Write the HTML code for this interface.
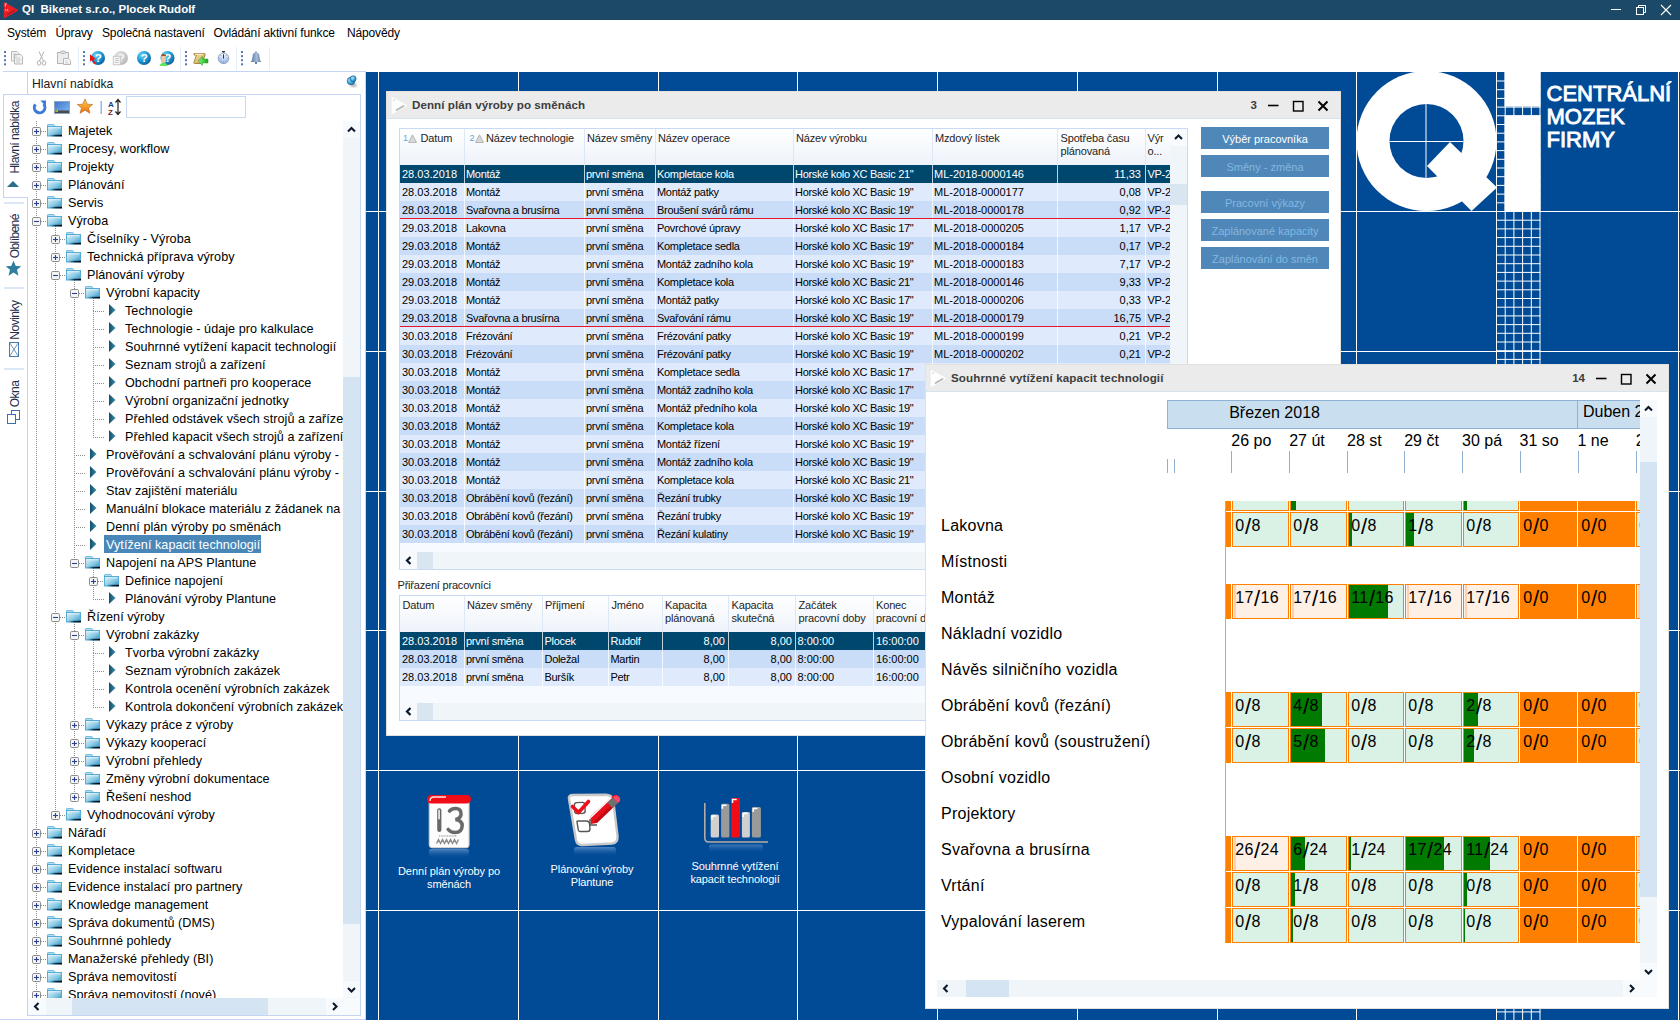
<!DOCTYPE html><html><head><meta charset="utf-8"><title>QI</title><style>
*{box-sizing:border-box}
html,body{margin:0;padding:0}
body{width:1680px;height:1020px;position:relative;overflow:hidden;background:#fff;font-family:"Liberation Sans",sans-serif;color:#000}
div{position:absolute}
svg{position:absolute}
.t{white-space:nowrap;line-height:1}
.sl{display:inline-block;transform:translateY(0.9px) scale(1.38,1.33);margin:0 1.1px 0 1.3px}
</style></head><body><div style="left:0px;top:0px;width:1680px;height:20px;background:#1c4968"></div><svg style="left:3px;top:1px" width="17" height="18" viewBox="0 0 17 18"><path d="M1.2 1.5 L15 9.2 L1.2 17 Z" fill="#ee1c24" stroke="#ee1c24" stroke-width="0.8" stroke-linejoin="round"/><path d="M4.5 13.5 L11.5 9.3" stroke="#a81818" stroke-width="1.3" stroke-linecap="round"/><path d="M2.3 5.5 V2.8 H3.8" stroke="#f8c8c8" stroke-width="1" fill="none"/><path d="M2 8.2 L3 9.2 L2 10.2 M4 8.2 L5 9.2 L4 10.2" stroke="#f6c0c0" stroke-width="0.9" fill="none"/></svg><div class="t" style="left:22px;top:4px;color:#fff;font-weight:bold;font-size:11.5px">QI&nbsp; Bikenet s.r.o., Plocek Rudolf</div><svg style="left:1600px;top:0" width="80" height="20" viewBox="0 0 80 20"><path d="M11 9.5 H21" stroke="#fff" stroke-width="1"/><rect x="36.5" y="7.5" width="7" height="7" fill="none" stroke="#fff"/><path d="M38.5 7.5 V5.5 H45.5 V12.5 H43.5" fill="none" stroke="#fff"/><path d="M61 5 L71 15 M71 5 L61 15" stroke="#fff" stroke-width="1.1"/></svg><div class="t" style="left:7px;top:27px;font-size:12px;letter-spacing:-0.15px;color:#000">Systém</div><div class="t" style="left:55.5px;top:27px;font-size:12px;letter-spacing:-0.15px;color:#000">Úpravy</div><div class="t" style="left:102px;top:27px;font-size:12px;letter-spacing:-0.15px;color:#000">Společná nastavení</div><div class="t" style="left:213.5px;top:27px;font-size:12px;letter-spacing:-0.15px;color:#000">Ovládání aktivní funkce</div><div class="t" style="left:347px;top:27px;font-size:12px;letter-spacing:-0.15px;color:#000">Nápovědy</div><svg style="left:4px;top:51px" width="3" height="16"><rect x="0" y="0.0" width="2" height="2" fill="#5578b4"/><rect x="0" y="4.1" width="2" height="2" fill="#5578b4"/><rect x="0" y="8.2" width="2" height="2" fill="#5578b4"/><rect x="0" y="12.3" width="2" height="2" fill="#5578b4"/></svg><svg style="left:83px;top:51px" width="3" height="16"><rect x="0" y="0.0" width="2" height="2" fill="#5578b4"/><rect x="0" y="4.1" width="2" height="2" fill="#5578b4"/><rect x="0" y="8.2" width="2" height="2" fill="#5578b4"/><rect x="0" y="12.3" width="2" height="2" fill="#5578b4"/></svg><svg style="left:185px;top:51px" width="3" height="16"><rect x="0" y="0.0" width="2" height="2" fill="#5578b4"/><rect x="0" y="4.1" width="2" height="2" fill="#5578b4"/><rect x="0" y="8.2" width="2" height="2" fill="#5578b4"/><rect x="0" y="12.3" width="2" height="2" fill="#5578b4"/></svg><svg style="left:241px;top:51px" width="3" height="16"><rect x="0" y="0.0" width="2" height="2" fill="#5578b4"/><rect x="0" y="4.1" width="2" height="2" fill="#5578b4"/><rect x="0" y="8.2" width="2" height="2" fill="#5578b4"/><rect x="0" y="12.3" width="2" height="2" fill="#5578b4"/></svg><div style="left:78px;top:47px;width:1px;height:23px;background:#e6eef9"></div><div style="left:180px;top:47px;width:1px;height:23px;background:#e6eef9"></div><div style="left:236px;top:47px;width:1px;height:23px;background:#e6eef9"></div><div style="left:269px;top:47px;width:1px;height:23px;background:#e6eef9"></div><svg style="left:0;top:0" width="280" height="72"><defs><radialGradient id="hg" cx="0.35" cy="0.3" r="0.75"><stop offset="0" stop-color="#6fd4f8"/><stop offset="0.55" stop-color="#1a9ad6"/><stop offset="1" stop-color="#0a5e98"/></radialGradient><radialGradient id="gg" cx="0.35" cy="0.3" r="0.75"><stop offset="0" stop-color="#e6e6e6"/><stop offset="1" stop-color="#b8b8b8"/></radialGradient><linearGradient id="pg" x1="0" y1="0" x2="1" y2="1"><stop offset="0" stop-color="#f8e8b0"/><stop offset="1" stop-color="#c89a40"/></linearGradient><linearGradient id="arg" x1="0" y1="0" x2="1" y2="0"><stop offset="0" stop-color="#8af08a"/><stop offset="1" stop-color="#1aa81a"/></linearGradient><linearGradient id="swg" x1="0" y1="0" x2="0" y2="1"><stop offset="0" stop-color="#fafcff"/><stop offset="1" stop-color="#98b8e8"/></linearGradient><linearGradient id="blg" x1="0" y1="0" x2="1" y2="0"><stop offset="0" stop-color="#4a70a0"/><stop offset="0.55" stop-color="#a8bcd8"/><stop offset="1" stop-color="#5a7aa8"/></linearGradient></defs><g stroke="#b0b0b0" stroke-width="0.9" fill="#f4f4f4"><path d="M11.5 51.5h5.5l2 2v7.5h-7.5z"/><path d="M14.5 54.5h6l2 2v7.5h-8z"/></g><path d="M13 54h3 M13 56h4 M13 58h3 M16 58h4 M16 60h5 M16 62h4" stroke="#c0c0c0" stroke-width="0.8"/><g stroke="#b4b4b4" fill="none" stroke-width="1"><path d="M39 51.5 L43.5 61 M44 51.5 L39.5 61"/><ellipse cx="39" cy="63" rx="1.8" ry="2.2"/><ellipse cx="44" cy="63" rx="1.8" ry="2.2"/></g><g stroke="#b0b0b0" stroke-width="0.9"><rect x="57.5" y="52.5" width="11" height="11" fill="#ececec"/><rect x="60.5" y="51" width="5" height="2.5" rx="1" fill="#e0e0e0"/><path d="M63.5 58.5h5l2 2v4h-7z" fill="#f8f8f8"/></g><path d="M65 61h3 M65 63h4" stroke="#c4c4c4" stroke-width="0.8"/><circle cx="98" cy="58" r="7" fill="url(#hg)"/><text x="98.3" y="62.2" font-size="11.5" font-weight="bold" text-anchor="middle" fill="#fff" font-family="Liberation Sans">?</text><path d="M90 54.2 L90 61.8 L92 60 L94.3 64.3 L95.6 63.6 L93.4 59.4 L96 59.2 Z" fill="#f01010"/><circle cx="121" cy="58" r="7" fill="url(#gg)"/><text x="121.3" y="62.2" font-size="11.5" font-weight="bold" text-anchor="middle" fill="#f2f2f2" font-family="Liberation Sans">?</text><rect x="113.3" y="56.3" width="7" height="8.5" fill="#f6f6f6" stroke="#c4c4c4" stroke-width="0.9"/><path d="M115 58.5h4 M115 60.5h4 M115 62.5h3.5" stroke="#bbb" stroke-width="0.8"/><circle cx="144" cy="58" r="7" fill="url(#hg)"/><text x="144.3" y="62.2" font-size="11.5" font-weight="bold" text-anchor="middle" fill="#fff" font-family="Liberation Sans">?</text><circle cx="167.5" cy="58" r="7" fill="url(#hg)"/><text x="167.8" y="62.2" font-size="11.5" font-weight="bold" text-anchor="middle" fill="#fff" font-family="Liberation Sans">?</text><path d="M159.5 66 Q160 63 163.5 62.8 Q167 63 167.8 66 Z" fill="#5ee85e"/><rect x="161.2" y="55.5" width="4.6" height="7.2" rx="1.5" fill="#f0c8a0"/><path d="M160.8 57.5 Q160.8 54 163.5 54 Q166.3 54 166.3 57 L165.5 56 L161.5 56 Z" fill="#a0521a"/><path d="M194 53.5 H204.5 Q205.5 53.5 205 55 L202.5 62.5 Q202 63.5 201 63.5 H194.5 Q193.5 63.5 194 62 L196.5 55 L194 55 Z" fill="url(#pg)" stroke="#9a7028" stroke-width="0.8"/><path d="M195 54.2 H203" stroke="#fff6d8" stroke-width="0.9"/><path d="M198 61 L202.5 56.5 V59 H208 V63 H202.5 V65.5 Z" fill="url(#arg)" stroke="#22a022" stroke-width="0.5"/><rect x="222" y="51" width="3" height="1.3" fill="#333"/><path d="M223.5 52 V53" stroke="#666"/><circle cx="223.5" cy="58.3" r="5.3" fill="url(#swg)" stroke="#7a8ab0" stroke-width="0.8"/><path d="M223.5 54.5 V58.5" stroke="#333" stroke-width="1"/><circle cx="227.10" cy="58.30" r="0.45" fill="#4a4a7a"/><circle cx="226.05" cy="60.85" r="0.45" fill="#4a4a7a"/><circle cx="223.50" cy="61.90" r="0.45" fill="#4a4a7a"/><circle cx="220.95" cy="60.85" r="0.45" fill="#4a4a7a"/><circle cx="219.90" cy="58.30" r="0.45" fill="#4a4a7a"/><circle cx="220.95" cy="55.75" r="0.45" fill="#4a4a7a"/><circle cx="223.50" cy="54.70" r="0.45" fill="#4a4a7a"/><circle cx="226.05" cy="55.75" r="0.45" fill="#4a4a7a"/><path d="M256 52.2 Q252.5 52.5 252.5 57 Q252.5 60.5 250.8 62 H261.2 Q259.5 60.5 259.5 57 Q259.5 52.5 256 52.2 Z" fill="url(#blg)"/><rect x="255" y="62" width="2" height="1.8" fill="#4a70a0"/><rect x="255.3" y="51.5" width="1.4" height="1.2" fill="#5a7aa8"/></svg><div style="left:3px;top:71px;width:363px;height:1px;background:#c3d5f2"></div><div style="left:365px;top:71px;width:1px;height:949px;background:#c3d5f2"></div><div style="left:27px;top:71px;width:1px;height:23px;background:#c3d5f2"></div><div class="t" style="left:32px;top:77.6px;font-size:12.2px;color:#1b1b1b">Hlavní nabídka</div><svg style="left:344px;top:74px" width="16" height="16" viewBox="0 0 16 16"><defs><radialGradient id="pinh" cx="0.4" cy="0.35" r="0.7"><stop offset="0" stop-color="#b8e8fa"/><stop offset="0.6" stop-color="#3aa8dc"/><stop offset="1" stop-color="#1a6aa0"/></radialGradient><filter id="pbl"><feGaussianBlur stdDeviation="1"/></filter></defs><ellipse cx="9.5" cy="11" rx="3.2" ry="2" fill="#555" opacity="0.45" filter="url(#pbl)"/><circle cx="7" cy="7" r="3.8" fill="url(#pinh)" stroke="#1f5f90" stroke-width="0.7"/><circle cx="9.1" cy="4.8" r="3" fill="url(#pinh)" stroke="#1f5f90" stroke-width="0.7"/></svg><div style="left:3px;top:94px;width:358px;height:1px;background:#c3d5f2"></div><div style="left:3px;top:94px;width:1px;height:104px;background:#c3d5f2"></div><div style="left:3px;top:197px;width:25px;height:1px;background:#c3d5f2"></div><div style="left:27px;top:197px;width:1px;height:819px;background:#c3d5f2"></div><div style="left:360px;top:94px;width:1px;height:922px;background:#c3d5f2"></div><div style="left:27px;top:1015px;width:334px;height:1px;background:#c3d5f2"></div><div style="left:0px;top:1019px;width:366px;height:1px;background:#c3d5f2"></div><div style="left:4px;top:202px;width:20px;height:2px;background:#dbe6f6"></div><div style="left:4px;top:287px;width:20px;height:2px;background:#dbe6f6"></div><div style="left:4px;top:368px;width:20px;height:2px;background:#dbe6f6"></div><svg style="left:0;top:0" width="28" height="430"><text x="0" y="0" transform="translate(18.5,173.6) rotate(-90)" font-family="Liberation Sans" font-size="12" letter-spacing="-0.55" fill="#1f2d48">Hlavní nabídka</text></svg><svg style="left:0;top:0" width="28" height="430"><text x="0" y="0" transform="translate(18.5,258.2) rotate(-90)" font-family="Liberation Sans" font-size="12" letter-spacing="-0.6" fill="#1f2d48">Oblíbené</text></svg><svg style="left:0;top:0" width="28" height="430"><text x="0" y="0" transform="translate(18.5,339.7) rotate(-90)" font-family="Liberation Sans" font-size="12" letter-spacing="-0.5" fill="#1f2d48">Novinky</text></svg><svg style="left:0;top:0" width="28" height="430"><text x="0" y="0" transform="translate(18.5,407.3) rotate(-90)" font-family="Liberation Sans" font-size="12" letter-spacing="-0.5" fill="#1f2d48">Okna</text></svg><svg style="left:6px;top:180px" width="14" height="8"><path d="M1 7 L7 1 L13 7 Z" fill="#2b6f8a"/></svg><svg style="left:5px;top:260px" width="17" height="17" viewBox="0 0 17 17"><path d="M8.5 0.8 L10.8 6 L16.3 6.3 L12 9.8 L13.5 15.8 L8.5 12.5 L3.5 15.8 L5 9.8 L0.7 6.3 L6.2 6 Z" fill="#2f7ea0"/></svg><svg style="left:9px;top:342px" width="10" height="15"><rect x="0.5" y="0.5" width="9" height="14" fill="none" stroke="#4a7ab0"/><path d="M0.5 0.5 L5 7.5 L9.5 0.5 M0.5 14.5 L5 7.5 L9.5 14.5" fill="none" stroke="#4a7ab0" stroke-width="0.8"/></svg><svg style="left:7px;top:410px" width="13" height="14"><rect x="4.5" y="0.5" width="8" height="9" fill="#fff" stroke="#3a70b0"/><rect x="0.5" y="4.5" width="8" height="9" fill="#fff" stroke="#3a70b0"/></svg><svg style="left:30px;top:97px" width="220" height="22" viewBox="0 0 220 22"><defs><linearGradient id="stg" x1="0" y1="0" x2="0" y2="1"><stop offset="0" stop-color="#ffd84a"/><stop offset="1" stop-color="#f06a10"/></linearGradient><linearGradient id="mong" x1="0" y1="0" x2="1" y2="1"><stop offset="0" stop-color="#3f72c8"/><stop offset="1" stop-color="#82bdf5"/></linearGradient></defs><path d="M5.4 7.3 A5.3 5.3 0 1 0 13.6 7.0" fill="none" stroke="#3a7ad8" stroke-width="3"/><path d="M10.3 3.6 L16 3.6 L16 9.3 Z" fill="#3a7ad8"/><rect x="24.5" y="4.5" width="15" height="12" fill="url(#mong)" stroke="#8ea4c4"/><rect x="25" y="13.5" width="14" height="2.5" fill="#4a4a4a"/><rect x="25.5" y="12.5" width="2.5" height="2.5" fill="#f0a030"/><rect x="26" y="13" width="1.2" height="1.2" fill="#3cb040"/><path d="M55 2 L57.2 7.2 L62.6 7.5 L58.5 10.9 L59.9 16.2 L55 13.2 L50.1 16.2 L51.5 10.9 L47.4 7.5 L52.8 7.2 Z" fill="url(#stg)" stroke="#b8702a" stroke-width="0.7"/><rect x="70.5" y="4" width="1.5" height="13" fill="#9ab8da"/><text x="78" y="9.5" font-size="8" font-weight="bold" fill="#1c3a8a" font-family="Liberation Sans">A</text><text x="78" y="17.5" font-size="8" font-weight="bold" fill="#7a1a1a" font-family="Liberation Sans">Z</text><path d="M88 3 V17 M85.5 5.5 L88 2.5 L90.5 5.5 M85.5 14.5 L88 17.5 L90.5 14.5" fill="none" stroke="#222" stroke-width="1.2"/></svg><div style="left:126px;top:96px;width:120px;height:22px;border:1px solid #c7d9f0;background:#fff"></div><div style="left:28px;top:119px;width:315px;height:879px;overflow:hidden"><div style="left:-28px;top:-119px;width:400px;height:1000px"><svg style="left:0;top:0" width="343" height="1000" viewBox="0 0 343 1000"><defs><linearGradient id="fg" x1="0" y1="0" x2="1" y2="1"><stop offset="0" stop-color="#e4f4fb"/><stop offset="0.55" stop-color="#8ccbe6"/><stop offset="1" stop-color="#2a90c2"/></linearGradient><linearGradient id="fsh" x1="0" y1="0" x2="1" y2="0"><stop offset="0" stop-color="#1a6a90" stop-opacity="0"/><stop offset="0.5" stop-color="#0a3044"/><stop offset="1" stop-color="#000"/></linearGradient><linearGradient id="ag" x1="0" y1="0" x2="1" y2="0"><stop offset="0" stop-color="#134f6a"/><stop offset="1" stop-color="#3a8cab"/></linearGradient></defs><line x1="36.5" y1="131" x2="36.5" y2="149" stroke="#8c8c8c" stroke-dasharray="1,1"/><line x1="36.5" y1="149" x2="36.5" y2="167" stroke="#8c8c8c" stroke-dasharray="1,1"/><line x1="36.5" y1="167" x2="36.5" y2="185" stroke="#8c8c8c" stroke-dasharray="1,1"/><line x1="36.5" y1="185" x2="36.5" y2="203" stroke="#8c8c8c" stroke-dasharray="1,1"/><line x1="36.5" y1="203" x2="36.5" y2="221" stroke="#8c8c8c" stroke-dasharray="1,1"/><line x1="36.5" y1="221" x2="36.5" y2="833" stroke="#8c8c8c" stroke-dasharray="1,1"/><line x1="55.5" y1="239" x2="55.5" y2="257" stroke="#8c8c8c" stroke-dasharray="1,1"/><line x1="55.5" y1="257" x2="55.5" y2="275" stroke="#8c8c8c" stroke-dasharray="1,1"/><line x1="55.5" y1="275" x2="55.5" y2="617" stroke="#8c8c8c" stroke-dasharray="1,1"/><line x1="74.5" y1="293" x2="74.5" y2="455" stroke="#8c8c8c" stroke-dasharray="1,1"/><line x1="93.5" y1="311" x2="93.5" y2="329" stroke="#8c8c8c" stroke-dasharray="1,1"/><line x1="93.5" y1="329" x2="93.5" y2="347" stroke="#8c8c8c" stroke-dasharray="1,1"/><line x1="93.5" y1="347" x2="93.5" y2="365" stroke="#8c8c8c" stroke-dasharray="1,1"/><line x1="93.5" y1="365" x2="93.5" y2="383" stroke="#8c8c8c" stroke-dasharray="1,1"/><line x1="93.5" y1="383" x2="93.5" y2="401" stroke="#8c8c8c" stroke-dasharray="1,1"/><line x1="93.5" y1="401" x2="93.5" y2="419" stroke="#8c8c8c" stroke-dasharray="1,1"/><line x1="93.5" y1="419" x2="93.5" y2="437" stroke="#8c8c8c" stroke-dasharray="1,1"/><line x1="74.5" y1="455" x2="74.5" y2="473" stroke="#8c8c8c" stroke-dasharray="1,1"/><line x1="74.5" y1="473" x2="74.5" y2="491" stroke="#8c8c8c" stroke-dasharray="1,1"/><line x1="74.5" y1="491" x2="74.5" y2="509" stroke="#8c8c8c" stroke-dasharray="1,1"/><line x1="74.5" y1="509" x2="74.5" y2="527" stroke="#8c8c8c" stroke-dasharray="1,1"/><line x1="74.5" y1="527" x2="74.5" y2="545" stroke="#8c8c8c" stroke-dasharray="1,1"/><line x1="74.5" y1="545" x2="74.5" y2="563" stroke="#8c8c8c" stroke-dasharray="1,1"/><line x1="93.5" y1="581" x2="93.5" y2="599" stroke="#8c8c8c" stroke-dasharray="1,1"/><line x1="55.5" y1="617" x2="55.5" y2="815" stroke="#8c8c8c" stroke-dasharray="1,1"/><line x1="74.5" y1="635" x2="74.5" y2="725" stroke="#8c8c8c" stroke-dasharray="1,1"/><line x1="93.5" y1="653" x2="93.5" y2="671" stroke="#8c8c8c" stroke-dasharray="1,1"/><line x1="93.5" y1="671" x2="93.5" y2="689" stroke="#8c8c8c" stroke-dasharray="1,1"/><line x1="93.5" y1="689" x2="93.5" y2="707" stroke="#8c8c8c" stroke-dasharray="1,1"/><line x1="74.5" y1="725" x2="74.5" y2="743" stroke="#8c8c8c" stroke-dasharray="1,1"/><line x1="74.5" y1="743" x2="74.5" y2="761" stroke="#8c8c8c" stroke-dasharray="1,1"/><line x1="74.5" y1="761" x2="74.5" y2="779" stroke="#8c8c8c" stroke-dasharray="1,1"/><line x1="74.5" y1="779" x2="74.5" y2="797" stroke="#8c8c8c" stroke-dasharray="1,1"/><line x1="36.5" y1="833" x2="36.5" y2="851" stroke="#8c8c8c" stroke-dasharray="1,1"/><line x1="36.5" y1="851" x2="36.5" y2="869" stroke="#8c8c8c" stroke-dasharray="1,1"/><line x1="36.5" y1="869" x2="36.5" y2="887" stroke="#8c8c8c" stroke-dasharray="1,1"/><line x1="36.5" y1="887" x2="36.5" y2="905" stroke="#8c8c8c" stroke-dasharray="1,1"/><line x1="36.5" y1="905" x2="36.5" y2="923" stroke="#8c8c8c" stroke-dasharray="1,1"/><line x1="36.5" y1="923" x2="36.5" y2="941" stroke="#8c8c8c" stroke-dasharray="1,1"/><line x1="36.5" y1="941" x2="36.5" y2="959" stroke="#8c8c8c" stroke-dasharray="1,1"/><line x1="36.5" y1="959" x2="36.5" y2="977" stroke="#8c8c8c" stroke-dasharray="1,1"/><line x1="36.5" y1="977" x2="36.5" y2="995" stroke="#8c8c8c" stroke-dasharray="1,1"/><line x1="55.5" y1="226" x2="55.5" y2="239" stroke="#8c8c8c" stroke-dasharray="1,1"/><line x1="74.5" y1="280" x2="74.5" y2="293" stroke="#8c8c8c" stroke-dasharray="1,1"/><line x1="93.5" y1="298" x2="93.5" y2="311" stroke="#8c8c8c" stroke-dasharray="1,1"/><line x1="93.5" y1="568" x2="93.5" y2="581" stroke="#8c8c8c" stroke-dasharray="1,1"/><line x1="74.5" y1="622" x2="74.5" y2="635" stroke="#8c8c8c" stroke-dasharray="1,1"/><line x1="93.5" y1="640" x2="93.5" y2="653" stroke="#8c8c8c" stroke-dasharray="1,1"/><line x1="36.5" y1="121" x2="36.5" y2="130" stroke="#8c8c8c" stroke-dasharray="1,1"/><line x1="36.5" y1="994" x2="36.5" y2="1000" stroke="#8c8c8c" stroke-dasharray="1,1"/><line x1="41" y1="131.5" x2="47" y2="131.5" stroke="#8c8c8c" stroke-dasharray="1,1"/><rect x="32.5" y="127.5" width="8" height="8" rx="1.2" fill="#f6f6f6" stroke="#8c8c8c"/><path d="M34 131.5 H39" stroke="#2a3f98" stroke-width="1.1"/><path d="M36.5 129 V134" stroke="#2a3f98" stroke-width="1.1"/><g transform="translate(47,124)"><path d="M0.5 3 V1 Q0.5 0.5 1 0.5 H6.8 L7.8 1.8 V3 Z" fill="#b4dcef" stroke="#5eb2d8" stroke-width="0.8"/><rect x="0.5" y="2.5" width="14" height="9.5" fill="url(#fg)" stroke="#4aa6d0" stroke-width="0.9"/><rect x="1.5" y="3.3" width="12" height="1" fill="#e8f6fc" opacity="0.85"/><rect x="2" y="10.8" width="13" height="1.6" fill="url(#fsh)"/></g><line x1="41" y1="149.5" x2="47" y2="149.5" stroke="#8c8c8c" stroke-dasharray="1,1"/><rect x="32.5" y="145.5" width="8" height="8" rx="1.2" fill="#f6f6f6" stroke="#8c8c8c"/><path d="M34 149.5 H39" stroke="#2a3f98" stroke-width="1.1"/><path d="M36.5 147 V152" stroke="#2a3f98" stroke-width="1.1"/><g transform="translate(47,142)"><path d="M0.5 3 V1 Q0.5 0.5 1 0.5 H6.8 L7.8 1.8 V3 Z" fill="#b4dcef" stroke="#5eb2d8" stroke-width="0.8"/><rect x="0.5" y="2.5" width="14" height="9.5" fill="url(#fg)" stroke="#4aa6d0" stroke-width="0.9"/><rect x="1.5" y="3.3" width="12" height="1" fill="#e8f6fc" opacity="0.85"/><rect x="2" y="10.8" width="13" height="1.6" fill="url(#fsh)"/></g><line x1="41" y1="167.5" x2="47" y2="167.5" stroke="#8c8c8c" stroke-dasharray="1,1"/><rect x="32.5" y="163.5" width="8" height="8" rx="1.2" fill="#f6f6f6" stroke="#8c8c8c"/><path d="M34 167.5 H39" stroke="#2a3f98" stroke-width="1.1"/><path d="M36.5 165 V170" stroke="#2a3f98" stroke-width="1.1"/><g transform="translate(47,160)"><path d="M0.5 3 V1 Q0.5 0.5 1 0.5 H6.8 L7.8 1.8 V3 Z" fill="#b4dcef" stroke="#5eb2d8" stroke-width="0.8"/><rect x="0.5" y="2.5" width="14" height="9.5" fill="url(#fg)" stroke="#4aa6d0" stroke-width="0.9"/><rect x="1.5" y="3.3" width="12" height="1" fill="#e8f6fc" opacity="0.85"/><rect x="2" y="10.8" width="13" height="1.6" fill="url(#fsh)"/></g><line x1="41" y1="185.5" x2="47" y2="185.5" stroke="#8c8c8c" stroke-dasharray="1,1"/><rect x="32.5" y="181.5" width="8" height="8" rx="1.2" fill="#f6f6f6" stroke="#8c8c8c"/><path d="M34 185.5 H39" stroke="#2a3f98" stroke-width="1.1"/><path d="M36.5 183 V188" stroke="#2a3f98" stroke-width="1.1"/><g transform="translate(47,178)"><path d="M0.5 3 V1 Q0.5 0.5 1 0.5 H6.8 L7.8 1.8 V3 Z" fill="#b4dcef" stroke="#5eb2d8" stroke-width="0.8"/><rect x="0.5" y="2.5" width="14" height="9.5" fill="url(#fg)" stroke="#4aa6d0" stroke-width="0.9"/><rect x="1.5" y="3.3" width="12" height="1" fill="#e8f6fc" opacity="0.85"/><rect x="2" y="10.8" width="13" height="1.6" fill="url(#fsh)"/></g><line x1="41" y1="203.5" x2="47" y2="203.5" stroke="#8c8c8c" stroke-dasharray="1,1"/><rect x="32.5" y="199.5" width="8" height="8" rx="1.2" fill="#f6f6f6" stroke="#8c8c8c"/><path d="M34 203.5 H39" stroke="#2a3f98" stroke-width="1.1"/><path d="M36.5 201 V206" stroke="#2a3f98" stroke-width="1.1"/><g transform="translate(47,196)"><path d="M0.5 3 V1 Q0.5 0.5 1 0.5 H6.8 L7.8 1.8 V3 Z" fill="#b4dcef" stroke="#5eb2d8" stroke-width="0.8"/><rect x="0.5" y="2.5" width="14" height="9.5" fill="url(#fg)" stroke="#4aa6d0" stroke-width="0.9"/><rect x="1.5" y="3.3" width="12" height="1" fill="#e8f6fc" opacity="0.85"/><rect x="2" y="10.8" width="13" height="1.6" fill="url(#fsh)"/></g><line x1="41" y1="221.5" x2="47" y2="221.5" stroke="#8c8c8c" stroke-dasharray="1,1"/><rect x="32.5" y="217.5" width="8" height="8" rx="1.2" fill="#f6f6f6" stroke="#8c8c8c"/><path d="M34 221.5 H39" stroke="#2a3f98" stroke-width="1.1"/><g transform="translate(47,214)"><path d="M0.5 3 V1 Q0.5 0.5 1 0.5 H6.8 L7.8 1.8 V3 Z" fill="#b4dcef" stroke="#5eb2d8" stroke-width="0.8"/><rect x="0.5" y="2.5" width="14" height="9.5" fill="url(#fg)" stroke="#4aa6d0" stroke-width="0.9"/><rect x="1.5" y="3.3" width="12" height="1" fill="#e8f6fc" opacity="0.85"/><rect x="2" y="10.8" width="13" height="1.6" fill="url(#fsh)"/></g><line x1="60" y1="239.5" x2="66" y2="239.5" stroke="#8c8c8c" stroke-dasharray="1,1"/><rect x="51.5" y="235.5" width="8" height="8" rx="1.2" fill="#f6f6f6" stroke="#8c8c8c"/><path d="M53 239.5 H58" stroke="#2a3f98" stroke-width="1.1"/><path d="M55.5 237 V242" stroke="#2a3f98" stroke-width="1.1"/><g transform="translate(66,232)"><path d="M0.5 3 V1 Q0.5 0.5 1 0.5 H6.8 L7.8 1.8 V3 Z" fill="#b4dcef" stroke="#5eb2d8" stroke-width="0.8"/><rect x="0.5" y="2.5" width="14" height="9.5" fill="url(#fg)" stroke="#4aa6d0" stroke-width="0.9"/><rect x="1.5" y="3.3" width="12" height="1" fill="#e8f6fc" opacity="0.85"/><rect x="2" y="10.8" width="13" height="1.6" fill="url(#fsh)"/></g><line x1="60" y1="257.5" x2="66" y2="257.5" stroke="#8c8c8c" stroke-dasharray="1,1"/><rect x="51.5" y="253.5" width="8" height="8" rx="1.2" fill="#f6f6f6" stroke="#8c8c8c"/><path d="M53 257.5 H58" stroke="#2a3f98" stroke-width="1.1"/><path d="M55.5 255 V260" stroke="#2a3f98" stroke-width="1.1"/><g transform="translate(66,250)"><path d="M0.5 3 V1 Q0.5 0.5 1 0.5 H6.8 L7.8 1.8 V3 Z" fill="#b4dcef" stroke="#5eb2d8" stroke-width="0.8"/><rect x="0.5" y="2.5" width="14" height="9.5" fill="url(#fg)" stroke="#4aa6d0" stroke-width="0.9"/><rect x="1.5" y="3.3" width="12" height="1" fill="#e8f6fc" opacity="0.85"/><rect x="2" y="10.8" width="13" height="1.6" fill="url(#fsh)"/></g><line x1="60" y1="275.5" x2="66" y2="275.5" stroke="#8c8c8c" stroke-dasharray="1,1"/><rect x="51.5" y="271.5" width="8" height="8" rx="1.2" fill="#f6f6f6" stroke="#8c8c8c"/><path d="M53 275.5 H58" stroke="#2a3f98" stroke-width="1.1"/><g transform="translate(66,268)"><path d="M0.5 3 V1 Q0.5 0.5 1 0.5 H6.8 L7.8 1.8 V3 Z" fill="#b4dcef" stroke="#5eb2d8" stroke-width="0.8"/><rect x="0.5" y="2.5" width="14" height="9.5" fill="url(#fg)" stroke="#4aa6d0" stroke-width="0.9"/><rect x="1.5" y="3.3" width="12" height="1" fill="#e8f6fc" opacity="0.85"/><rect x="2" y="10.8" width="13" height="1.6" fill="url(#fsh)"/></g><line x1="79" y1="293.5" x2="85" y2="293.5" stroke="#8c8c8c" stroke-dasharray="1,1"/><rect x="70.5" y="289.5" width="8" height="8" rx="1.2" fill="#f6f6f6" stroke="#8c8c8c"/><path d="M72 293.5 H77" stroke="#2a3f98" stroke-width="1.1"/><g transform="translate(85,286)"><path d="M0.5 3 V1 Q0.5 0.5 1 0.5 H6.8 L7.8 1.8 V3 Z" fill="#b4dcef" stroke="#5eb2d8" stroke-width="0.8"/><rect x="0.5" y="2.5" width="14" height="9.5" fill="url(#fg)" stroke="#4aa6d0" stroke-width="0.9"/><rect x="1.5" y="3.3" width="12" height="1" fill="#e8f6fc" opacity="0.85"/><rect x="2" y="10.8" width="13" height="1.6" fill="url(#fsh)"/></g><line x1="93" y1="311.5" x2="104" y2="311.5" stroke="#8c8c8c" stroke-dasharray="1,1"/><path d="M109 304 L115.5 310 L109 316 Z" fill="url(#ag)"/><line x1="93" y1="329.5" x2="104" y2="329.5" stroke="#8c8c8c" stroke-dasharray="1,1"/><path d="M109 322 L115.5 328 L109 334 Z" fill="url(#ag)"/><line x1="93" y1="347.5" x2="104" y2="347.5" stroke="#8c8c8c" stroke-dasharray="1,1"/><path d="M109 340 L115.5 346 L109 352 Z" fill="url(#ag)"/><line x1="93" y1="365.5" x2="104" y2="365.5" stroke="#8c8c8c" stroke-dasharray="1,1"/><path d="M109 358 L115.5 364 L109 370 Z" fill="url(#ag)"/><line x1="93" y1="383.5" x2="104" y2="383.5" stroke="#8c8c8c" stroke-dasharray="1,1"/><path d="M109 376 L115.5 382 L109 388 Z" fill="url(#ag)"/><line x1="93" y1="401.5" x2="104" y2="401.5" stroke="#8c8c8c" stroke-dasharray="1,1"/><path d="M109 394 L115.5 400 L109 406 Z" fill="url(#ag)"/><line x1="93" y1="419.5" x2="104" y2="419.5" stroke="#8c8c8c" stroke-dasharray="1,1"/><path d="M109 412 L115.5 418 L109 424 Z" fill="url(#ag)"/><line x1="93" y1="437.5" x2="104" y2="437.5" stroke="#8c8c8c" stroke-dasharray="1,1"/><path d="M109 430 L115.5 436 L109 442 Z" fill="url(#ag)"/><line x1="74" y1="455.5" x2="85" y2="455.5" stroke="#8c8c8c" stroke-dasharray="1,1"/><path d="M90 448 L96.5 454 L90 460 Z" fill="url(#ag)"/><line x1="74" y1="473.5" x2="85" y2="473.5" stroke="#8c8c8c" stroke-dasharray="1,1"/><path d="M90 466 L96.5 472 L90 478 Z" fill="url(#ag)"/><line x1="74" y1="491.5" x2="85" y2="491.5" stroke="#8c8c8c" stroke-dasharray="1,1"/><path d="M90 484 L96.5 490 L90 496 Z" fill="url(#ag)"/><line x1="74" y1="509.5" x2="85" y2="509.5" stroke="#8c8c8c" stroke-dasharray="1,1"/><path d="M90 502 L96.5 508 L90 514 Z" fill="url(#ag)"/><line x1="74" y1="527.5" x2="85" y2="527.5" stroke="#8c8c8c" stroke-dasharray="1,1"/><path d="M90 520 L96.5 526 L90 532 Z" fill="url(#ag)"/><line x1="74" y1="545.5" x2="85" y2="545.5" stroke="#8c8c8c" stroke-dasharray="1,1"/><path d="M90 538 L96.5 544 L90 550 Z" fill="url(#ag)"/><line x1="79" y1="563.5" x2="85" y2="563.5" stroke="#8c8c8c" stroke-dasharray="1,1"/><rect x="70.5" y="559.5" width="8" height="8" rx="1.2" fill="#f6f6f6" stroke="#8c8c8c"/><path d="M72 563.5 H77" stroke="#2a3f98" stroke-width="1.1"/><g transform="translate(85,556)"><path d="M0.5 3 V1 Q0.5 0.5 1 0.5 H6.8 L7.8 1.8 V3 Z" fill="#b4dcef" stroke="#5eb2d8" stroke-width="0.8"/><rect x="0.5" y="2.5" width="14" height="9.5" fill="url(#fg)" stroke="#4aa6d0" stroke-width="0.9"/><rect x="1.5" y="3.3" width="12" height="1" fill="#e8f6fc" opacity="0.85"/><rect x="2" y="10.8" width="13" height="1.6" fill="url(#fsh)"/></g><line x1="98" y1="581.5" x2="104" y2="581.5" stroke="#8c8c8c" stroke-dasharray="1,1"/><rect x="89.5" y="577.5" width="8" height="8" rx="1.2" fill="#f6f6f6" stroke="#8c8c8c"/><path d="M91 581.5 H96" stroke="#2a3f98" stroke-width="1.1"/><path d="M93.5 579 V584" stroke="#2a3f98" stroke-width="1.1"/><g transform="translate(104,574)"><path d="M0.5 3 V1 Q0.5 0.5 1 0.5 H6.8 L7.8 1.8 V3 Z" fill="#b4dcef" stroke="#5eb2d8" stroke-width="0.8"/><rect x="0.5" y="2.5" width="14" height="9.5" fill="url(#fg)" stroke="#4aa6d0" stroke-width="0.9"/><rect x="1.5" y="3.3" width="12" height="1" fill="#e8f6fc" opacity="0.85"/><rect x="2" y="10.8" width="13" height="1.6" fill="url(#fsh)"/></g><line x1="93" y1="599.5" x2="104" y2="599.5" stroke="#8c8c8c" stroke-dasharray="1,1"/><path d="M109 592 L115.5 598 L109 604 Z" fill="url(#ag)"/><line x1="60" y1="617.5" x2="66" y2="617.5" stroke="#8c8c8c" stroke-dasharray="1,1"/><rect x="51.5" y="613.5" width="8" height="8" rx="1.2" fill="#f6f6f6" stroke="#8c8c8c"/><path d="M53 617.5 H58" stroke="#2a3f98" stroke-width="1.1"/><g transform="translate(66,610)"><path d="M0.5 3 V1 Q0.5 0.5 1 0.5 H6.8 L7.8 1.8 V3 Z" fill="#b4dcef" stroke="#5eb2d8" stroke-width="0.8"/><rect x="0.5" y="2.5" width="14" height="9.5" fill="url(#fg)" stroke="#4aa6d0" stroke-width="0.9"/><rect x="1.5" y="3.3" width="12" height="1" fill="#e8f6fc" opacity="0.85"/><rect x="2" y="10.8" width="13" height="1.6" fill="url(#fsh)"/></g><line x1="79" y1="635.5" x2="85" y2="635.5" stroke="#8c8c8c" stroke-dasharray="1,1"/><rect x="70.5" y="631.5" width="8" height="8" rx="1.2" fill="#f6f6f6" stroke="#8c8c8c"/><path d="M72 635.5 H77" stroke="#2a3f98" stroke-width="1.1"/><g transform="translate(85,628)"><path d="M0.5 3 V1 Q0.5 0.5 1 0.5 H6.8 L7.8 1.8 V3 Z" fill="#b4dcef" stroke="#5eb2d8" stroke-width="0.8"/><rect x="0.5" y="2.5" width="14" height="9.5" fill="url(#fg)" stroke="#4aa6d0" stroke-width="0.9"/><rect x="1.5" y="3.3" width="12" height="1" fill="#e8f6fc" opacity="0.85"/><rect x="2" y="10.8" width="13" height="1.6" fill="url(#fsh)"/></g><line x1="93" y1="653.5" x2="104" y2="653.5" stroke="#8c8c8c" stroke-dasharray="1,1"/><path d="M109 646 L115.5 652 L109 658 Z" fill="url(#ag)"/><line x1="93" y1="671.5" x2="104" y2="671.5" stroke="#8c8c8c" stroke-dasharray="1,1"/><path d="M109 664 L115.5 670 L109 676 Z" fill="url(#ag)"/><line x1="93" y1="689.5" x2="104" y2="689.5" stroke="#8c8c8c" stroke-dasharray="1,1"/><path d="M109 682 L115.5 688 L109 694 Z" fill="url(#ag)"/><line x1="93" y1="707.5" x2="104" y2="707.5" stroke="#8c8c8c" stroke-dasharray="1,1"/><path d="M109 700 L115.5 706 L109 712 Z" fill="url(#ag)"/><line x1="79" y1="725.5" x2="85" y2="725.5" stroke="#8c8c8c" stroke-dasharray="1,1"/><rect x="70.5" y="721.5" width="8" height="8" rx="1.2" fill="#f6f6f6" stroke="#8c8c8c"/><path d="M72 725.5 H77" stroke="#2a3f98" stroke-width="1.1"/><path d="M74.5 723 V728" stroke="#2a3f98" stroke-width="1.1"/><g transform="translate(85,718)"><path d="M0.5 3 V1 Q0.5 0.5 1 0.5 H6.8 L7.8 1.8 V3 Z" fill="#b4dcef" stroke="#5eb2d8" stroke-width="0.8"/><rect x="0.5" y="2.5" width="14" height="9.5" fill="url(#fg)" stroke="#4aa6d0" stroke-width="0.9"/><rect x="1.5" y="3.3" width="12" height="1" fill="#e8f6fc" opacity="0.85"/><rect x="2" y="10.8" width="13" height="1.6" fill="url(#fsh)"/></g><line x1="79" y1="743.5" x2="85" y2="743.5" stroke="#8c8c8c" stroke-dasharray="1,1"/><rect x="70.5" y="739.5" width="8" height="8" rx="1.2" fill="#f6f6f6" stroke="#8c8c8c"/><path d="M72 743.5 H77" stroke="#2a3f98" stroke-width="1.1"/><path d="M74.5 741 V746" stroke="#2a3f98" stroke-width="1.1"/><g transform="translate(85,736)"><path d="M0.5 3 V1 Q0.5 0.5 1 0.5 H6.8 L7.8 1.8 V3 Z" fill="#b4dcef" stroke="#5eb2d8" stroke-width="0.8"/><rect x="0.5" y="2.5" width="14" height="9.5" fill="url(#fg)" stroke="#4aa6d0" stroke-width="0.9"/><rect x="1.5" y="3.3" width="12" height="1" fill="#e8f6fc" opacity="0.85"/><rect x="2" y="10.8" width="13" height="1.6" fill="url(#fsh)"/></g><line x1="79" y1="761.5" x2="85" y2="761.5" stroke="#8c8c8c" stroke-dasharray="1,1"/><rect x="70.5" y="757.5" width="8" height="8" rx="1.2" fill="#f6f6f6" stroke="#8c8c8c"/><path d="M72 761.5 H77" stroke="#2a3f98" stroke-width="1.1"/><path d="M74.5 759 V764" stroke="#2a3f98" stroke-width="1.1"/><g transform="translate(85,754)"><path d="M0.5 3 V1 Q0.5 0.5 1 0.5 H6.8 L7.8 1.8 V3 Z" fill="#b4dcef" stroke="#5eb2d8" stroke-width="0.8"/><rect x="0.5" y="2.5" width="14" height="9.5" fill="url(#fg)" stroke="#4aa6d0" stroke-width="0.9"/><rect x="1.5" y="3.3" width="12" height="1" fill="#e8f6fc" opacity="0.85"/><rect x="2" y="10.8" width="13" height="1.6" fill="url(#fsh)"/></g><line x1="79" y1="779.5" x2="85" y2="779.5" stroke="#8c8c8c" stroke-dasharray="1,1"/><rect x="70.5" y="775.5" width="8" height="8" rx="1.2" fill="#f6f6f6" stroke="#8c8c8c"/><path d="M72 779.5 H77" stroke="#2a3f98" stroke-width="1.1"/><path d="M74.5 777 V782" stroke="#2a3f98" stroke-width="1.1"/><g transform="translate(85,772)"><path d="M0.5 3 V1 Q0.5 0.5 1 0.5 H6.8 L7.8 1.8 V3 Z" fill="#b4dcef" stroke="#5eb2d8" stroke-width="0.8"/><rect x="0.5" y="2.5" width="14" height="9.5" fill="url(#fg)" stroke="#4aa6d0" stroke-width="0.9"/><rect x="1.5" y="3.3" width="12" height="1" fill="#e8f6fc" opacity="0.85"/><rect x="2" y="10.8" width="13" height="1.6" fill="url(#fsh)"/></g><line x1="79" y1="797.5" x2="85" y2="797.5" stroke="#8c8c8c" stroke-dasharray="1,1"/><rect x="70.5" y="793.5" width="8" height="8" rx="1.2" fill="#f6f6f6" stroke="#8c8c8c"/><path d="M72 797.5 H77" stroke="#2a3f98" stroke-width="1.1"/><path d="M74.5 795 V800" stroke="#2a3f98" stroke-width="1.1"/><g transform="translate(85,790)"><path d="M0.5 3 V1 Q0.5 0.5 1 0.5 H6.8 L7.8 1.8 V3 Z" fill="#b4dcef" stroke="#5eb2d8" stroke-width="0.8"/><rect x="0.5" y="2.5" width="14" height="9.5" fill="url(#fg)" stroke="#4aa6d0" stroke-width="0.9"/><rect x="1.5" y="3.3" width="12" height="1" fill="#e8f6fc" opacity="0.85"/><rect x="2" y="10.8" width="13" height="1.6" fill="url(#fsh)"/></g><line x1="60" y1="815.5" x2="66" y2="815.5" stroke="#8c8c8c" stroke-dasharray="1,1"/><rect x="51.5" y="811.5" width="8" height="8" rx="1.2" fill="#f6f6f6" stroke="#8c8c8c"/><path d="M53 815.5 H58" stroke="#2a3f98" stroke-width="1.1"/><path d="M55.5 813 V818" stroke="#2a3f98" stroke-width="1.1"/><g transform="translate(66,808)"><path d="M0.5 3 V1 Q0.5 0.5 1 0.5 H6.8 L7.8 1.8 V3 Z" fill="#b4dcef" stroke="#5eb2d8" stroke-width="0.8"/><rect x="0.5" y="2.5" width="14" height="9.5" fill="url(#fg)" stroke="#4aa6d0" stroke-width="0.9"/><rect x="1.5" y="3.3" width="12" height="1" fill="#e8f6fc" opacity="0.85"/><rect x="2" y="10.8" width="13" height="1.6" fill="url(#fsh)"/></g><line x1="41" y1="833.5" x2="47" y2="833.5" stroke="#8c8c8c" stroke-dasharray="1,1"/><rect x="32.5" y="829.5" width="8" height="8" rx="1.2" fill="#f6f6f6" stroke="#8c8c8c"/><path d="M34 833.5 H39" stroke="#2a3f98" stroke-width="1.1"/><path d="M36.5 831 V836" stroke="#2a3f98" stroke-width="1.1"/><g transform="translate(47,826)"><path d="M0.5 3 V1 Q0.5 0.5 1 0.5 H6.8 L7.8 1.8 V3 Z" fill="#b4dcef" stroke="#5eb2d8" stroke-width="0.8"/><rect x="0.5" y="2.5" width="14" height="9.5" fill="url(#fg)" stroke="#4aa6d0" stroke-width="0.9"/><rect x="1.5" y="3.3" width="12" height="1" fill="#e8f6fc" opacity="0.85"/><rect x="2" y="10.8" width="13" height="1.6" fill="url(#fsh)"/></g><line x1="41" y1="851.5" x2="47" y2="851.5" stroke="#8c8c8c" stroke-dasharray="1,1"/><rect x="32.5" y="847.5" width="8" height="8" rx="1.2" fill="#f6f6f6" stroke="#8c8c8c"/><path d="M34 851.5 H39" stroke="#2a3f98" stroke-width="1.1"/><path d="M36.5 849 V854" stroke="#2a3f98" stroke-width="1.1"/><g transform="translate(47,844)"><path d="M0.5 3 V1 Q0.5 0.5 1 0.5 H6.8 L7.8 1.8 V3 Z" fill="#b4dcef" stroke="#5eb2d8" stroke-width="0.8"/><rect x="0.5" y="2.5" width="14" height="9.5" fill="url(#fg)" stroke="#4aa6d0" stroke-width="0.9"/><rect x="1.5" y="3.3" width="12" height="1" fill="#e8f6fc" opacity="0.85"/><rect x="2" y="10.8" width="13" height="1.6" fill="url(#fsh)"/></g><line x1="41" y1="869.5" x2="47" y2="869.5" stroke="#8c8c8c" stroke-dasharray="1,1"/><rect x="32.5" y="865.5" width="8" height="8" rx="1.2" fill="#f6f6f6" stroke="#8c8c8c"/><path d="M34 869.5 H39" stroke="#2a3f98" stroke-width="1.1"/><path d="M36.5 867 V872" stroke="#2a3f98" stroke-width="1.1"/><g transform="translate(47,862)"><path d="M0.5 3 V1 Q0.5 0.5 1 0.5 H6.8 L7.8 1.8 V3 Z" fill="#b4dcef" stroke="#5eb2d8" stroke-width="0.8"/><rect x="0.5" y="2.5" width="14" height="9.5" fill="url(#fg)" stroke="#4aa6d0" stroke-width="0.9"/><rect x="1.5" y="3.3" width="12" height="1" fill="#e8f6fc" opacity="0.85"/><rect x="2" y="10.8" width="13" height="1.6" fill="url(#fsh)"/></g><line x1="41" y1="887.5" x2="47" y2="887.5" stroke="#8c8c8c" stroke-dasharray="1,1"/><rect x="32.5" y="883.5" width="8" height="8" rx="1.2" fill="#f6f6f6" stroke="#8c8c8c"/><path d="M34 887.5 H39" stroke="#2a3f98" stroke-width="1.1"/><path d="M36.5 885 V890" stroke="#2a3f98" stroke-width="1.1"/><g transform="translate(47,880)"><path d="M0.5 3 V1 Q0.5 0.5 1 0.5 H6.8 L7.8 1.8 V3 Z" fill="#b4dcef" stroke="#5eb2d8" stroke-width="0.8"/><rect x="0.5" y="2.5" width="14" height="9.5" fill="url(#fg)" stroke="#4aa6d0" stroke-width="0.9"/><rect x="1.5" y="3.3" width="12" height="1" fill="#e8f6fc" opacity="0.85"/><rect x="2" y="10.8" width="13" height="1.6" fill="url(#fsh)"/></g><line x1="41" y1="905.5" x2="47" y2="905.5" stroke="#8c8c8c" stroke-dasharray="1,1"/><rect x="32.5" y="901.5" width="8" height="8" rx="1.2" fill="#f6f6f6" stroke="#8c8c8c"/><path d="M34 905.5 H39" stroke="#2a3f98" stroke-width="1.1"/><path d="M36.5 903 V908" stroke="#2a3f98" stroke-width="1.1"/><g transform="translate(47,898)"><path d="M0.5 3 V1 Q0.5 0.5 1 0.5 H6.8 L7.8 1.8 V3 Z" fill="#b4dcef" stroke="#5eb2d8" stroke-width="0.8"/><rect x="0.5" y="2.5" width="14" height="9.5" fill="url(#fg)" stroke="#4aa6d0" stroke-width="0.9"/><rect x="1.5" y="3.3" width="12" height="1" fill="#e8f6fc" opacity="0.85"/><rect x="2" y="10.8" width="13" height="1.6" fill="url(#fsh)"/></g><line x1="41" y1="923.5" x2="47" y2="923.5" stroke="#8c8c8c" stroke-dasharray="1,1"/><rect x="32.5" y="919.5" width="8" height="8" rx="1.2" fill="#f6f6f6" stroke="#8c8c8c"/><path d="M34 923.5 H39" stroke="#2a3f98" stroke-width="1.1"/><path d="M36.5 921 V926" stroke="#2a3f98" stroke-width="1.1"/><g transform="translate(47,916)"><path d="M0.5 3 V1 Q0.5 0.5 1 0.5 H6.8 L7.8 1.8 V3 Z" fill="#b4dcef" stroke="#5eb2d8" stroke-width="0.8"/><rect x="0.5" y="2.5" width="14" height="9.5" fill="url(#fg)" stroke="#4aa6d0" stroke-width="0.9"/><rect x="1.5" y="3.3" width="12" height="1" fill="#e8f6fc" opacity="0.85"/><rect x="2" y="10.8" width="13" height="1.6" fill="url(#fsh)"/></g><line x1="41" y1="941.5" x2="47" y2="941.5" stroke="#8c8c8c" stroke-dasharray="1,1"/><rect x="32.5" y="937.5" width="8" height="8" rx="1.2" fill="#f6f6f6" stroke="#8c8c8c"/><path d="M34 941.5 H39" stroke="#2a3f98" stroke-width="1.1"/><path d="M36.5 939 V944" stroke="#2a3f98" stroke-width="1.1"/><g transform="translate(47,934)"><path d="M0.5 3 V1 Q0.5 0.5 1 0.5 H6.8 L7.8 1.8 V3 Z" fill="#b4dcef" stroke="#5eb2d8" stroke-width="0.8"/><rect x="0.5" y="2.5" width="14" height="9.5" fill="url(#fg)" stroke="#4aa6d0" stroke-width="0.9"/><rect x="1.5" y="3.3" width="12" height="1" fill="#e8f6fc" opacity="0.85"/><rect x="2" y="10.8" width="13" height="1.6" fill="url(#fsh)"/></g><line x1="41" y1="959.5" x2="47" y2="959.5" stroke="#8c8c8c" stroke-dasharray="1,1"/><rect x="32.5" y="955.5" width="8" height="8" rx="1.2" fill="#f6f6f6" stroke="#8c8c8c"/><path d="M34 959.5 H39" stroke="#2a3f98" stroke-width="1.1"/><path d="M36.5 957 V962" stroke="#2a3f98" stroke-width="1.1"/><g transform="translate(47,952)"><path d="M0.5 3 V1 Q0.5 0.5 1 0.5 H6.8 L7.8 1.8 V3 Z" fill="#b4dcef" stroke="#5eb2d8" stroke-width="0.8"/><rect x="0.5" y="2.5" width="14" height="9.5" fill="url(#fg)" stroke="#4aa6d0" stroke-width="0.9"/><rect x="1.5" y="3.3" width="12" height="1" fill="#e8f6fc" opacity="0.85"/><rect x="2" y="10.8" width="13" height="1.6" fill="url(#fsh)"/></g><line x1="41" y1="977.5" x2="47" y2="977.5" stroke="#8c8c8c" stroke-dasharray="1,1"/><rect x="32.5" y="973.5" width="8" height="8" rx="1.2" fill="#f6f6f6" stroke="#8c8c8c"/><path d="M34 977.5 H39" stroke="#2a3f98" stroke-width="1.1"/><path d="M36.5 975 V980" stroke="#2a3f98" stroke-width="1.1"/><g transform="translate(47,970)"><path d="M0.5 3 V1 Q0.5 0.5 1 0.5 H6.8 L7.8 1.8 V3 Z" fill="#b4dcef" stroke="#5eb2d8" stroke-width="0.8"/><rect x="0.5" y="2.5" width="14" height="9.5" fill="url(#fg)" stroke="#4aa6d0" stroke-width="0.9"/><rect x="1.5" y="3.3" width="12" height="1" fill="#e8f6fc" opacity="0.85"/><rect x="2" y="10.8" width="13" height="1.6" fill="url(#fsh)"/></g><line x1="41" y1="995.5" x2="47" y2="995.5" stroke="#8c8c8c" stroke-dasharray="1,1"/><rect x="32.5" y="991.5" width="8" height="8" rx="1.2" fill="#f6f6f6" stroke="#8c8c8c"/><path d="M34 995.5 H39" stroke="#2a3f98" stroke-width="1.1"/><path d="M36.5 993 V998" stroke="#2a3f98" stroke-width="1.1"/><g transform="translate(47,988)"><path d="M0.5 3 V1 Q0.5 0.5 1 0.5 H6.8 L7.8 1.8 V3 Z" fill="#b4dcef" stroke="#5eb2d8" stroke-width="0.8"/><rect x="0.5" y="2.5" width="14" height="9.5" fill="url(#fg)" stroke="#4aa6d0" stroke-width="0.9"/><rect x="1.5" y="3.3" width="12" height="1" fill="#e8f6fc" opacity="0.85"/><rect x="2" y="10.8" width="13" height="1.6" fill="url(#fsh)"/></g></svg><div class="t" style="left:68px;top:124.5px;font-size:12.6px;letter-spacing:0.05px;color:#000">Majetek</div><div class="t" style="left:68px;top:142.5px;font-size:12.6px;letter-spacing:0.05px;color:#000">Procesy, workflow</div><div class="t" style="left:68px;top:160.5px;font-size:12.6px;letter-spacing:0.05px;color:#000">Projekty</div><div class="t" style="left:68px;top:178.5px;font-size:12.6px;letter-spacing:0.05px;color:#000">Plánování</div><div class="t" style="left:68px;top:196.5px;font-size:12.6px;letter-spacing:0.05px;color:#000">Servis</div><div class="t" style="left:68px;top:214.5px;font-size:12.6px;letter-spacing:0.05px;color:#000">Výroba</div><div class="t" style="left:87px;top:232.5px;font-size:12.6px;letter-spacing:0.05px;color:#000">Číselníky - Výroba</div><div class="t" style="left:87px;top:250.5px;font-size:12.6px;letter-spacing:0.05px;color:#000">Technická příprava výroby</div><div class="t" style="left:87px;top:268.5px;font-size:12.6px;letter-spacing:0.05px;color:#000">Plánování výroby</div><div class="t" style="left:106px;top:286.5px;font-size:12.6px;letter-spacing:0.05px;color:#000">Výrobní kapacity</div><div class="t" style="left:125px;top:304.5px;font-size:12.6px;letter-spacing:0.05px;color:#000">Technologie</div><div class="t" style="left:125px;top:322.5px;font-size:12.6px;letter-spacing:0.05px;color:#000">Technologie - údaje pro kalkulace</div><div class="t" style="left:125px;top:340.5px;font-size:12.6px;letter-spacing:0.05px;color:#000">Souhrnné vytížení kapacit technologií</div><div class="t" style="left:125px;top:358.5px;font-size:12.6px;letter-spacing:0.05px;color:#000">Seznam strojů a zařízení</div><div class="t" style="left:125px;top:376.5px;font-size:12.6px;letter-spacing:0.05px;color:#000">Obchodní partneři pro kooperace</div><div class="t" style="left:125px;top:394.5px;font-size:12.6px;letter-spacing:0.05px;color:#000">Výrobní organizační jednotky</div><div class="t" style="left:125px;top:412.5px;font-size:12.6px;letter-spacing:0.05px;color:#000">Přehled odstávek všech strojů a zařízení</div><div class="t" style="left:125px;top:430.5px;font-size:12.6px;letter-spacing:0.05px;color:#000">Přehled kapacit všech strojů a zařízení</div><div class="t" style="left:106px;top:448.5px;font-size:12.6px;letter-spacing:0.05px;color:#000">Prověřování a schvalování plánu výroby - zkrácené</div><div class="t" style="left:106px;top:466.5px;font-size:12.6px;letter-spacing:0.05px;color:#000">Prověřování a schvalování plánu výroby - podrobné</div><div class="t" style="left:106px;top:484.5px;font-size:12.6px;letter-spacing:0.05px;color:#000">Stav zajištění materiálu</div><div class="t" style="left:106px;top:502.5px;font-size:12.6px;letter-spacing:0.05px;color:#000">Manuální blokace materiálu z žádanek na výdej</div><div class="t" style="left:106px;top:520.5px;font-size:12.6px;letter-spacing:0.05px;color:#000">Denní plán výroby po směnách</div><div style="left:104px;top:535px;width:157px;height:18px;background:#4a87b9"></div><div class="t" style="left:106px;top:538.5px;font-size:12.6px;letter-spacing:0.05px;color:#fff">Vytížení kapacit technologií</div><div class="t" style="left:106px;top:556.5px;font-size:12.6px;letter-spacing:0.05px;color:#000">Napojení na APS Plantune</div><div class="t" style="left:125px;top:574.5px;font-size:12.6px;letter-spacing:0.05px;color:#000">Definice napojení</div><div class="t" style="left:125px;top:592.5px;font-size:12.6px;letter-spacing:0.05px;color:#000">Plánování výroby Plantune</div><div class="t" style="left:87px;top:610.5px;font-size:12.6px;letter-spacing:0.05px;color:#000">Řízení výroby</div><div class="t" style="left:106px;top:628.5px;font-size:12.6px;letter-spacing:0.05px;color:#000">Výrobní zakázky</div><div class="t" style="left:125px;top:646.5px;font-size:12.6px;letter-spacing:0.05px;color:#000">Tvorba výrobní zakázky</div><div class="t" style="left:125px;top:664.5px;font-size:12.6px;letter-spacing:0.05px;color:#000">Seznam výrobních zakázek</div><div class="t" style="left:125px;top:682.5px;font-size:12.6px;letter-spacing:0.05px;color:#000">Kontrola ocenění výrobních zakázek</div><div class="t" style="left:125px;top:700.5px;font-size:12.6px;letter-spacing:0.05px;color:#000">Kontrola dokončení výrobních zakázek</div><div class="t" style="left:106px;top:718.5px;font-size:12.6px;letter-spacing:0.05px;color:#000">Výkazy práce z výroby</div><div class="t" style="left:106px;top:736.5px;font-size:12.6px;letter-spacing:0.05px;color:#000">Výkazy kooperací</div><div class="t" style="left:106px;top:754.5px;font-size:12.6px;letter-spacing:0.05px;color:#000">Výrobní přehledy</div><div class="t" style="left:106px;top:772.5px;font-size:12.6px;letter-spacing:0.05px;color:#000">Změny výrobní dokumentace</div><div class="t" style="left:106px;top:790.5px;font-size:12.6px;letter-spacing:0.05px;color:#000">Řešení neshod</div><div class="t" style="left:87px;top:808.5px;font-size:12.6px;letter-spacing:0.05px;color:#000">Vyhodnocování výroby</div><div class="t" style="left:68px;top:826.5px;font-size:12.6px;letter-spacing:0.05px;color:#000">Nářadí</div><div class="t" style="left:68px;top:844.5px;font-size:12.6px;letter-spacing:0.05px;color:#000">Kompletace</div><div class="t" style="left:68px;top:862.5px;font-size:12.6px;letter-spacing:0.05px;color:#000">Evidence instalací softwaru</div><div class="t" style="left:68px;top:880.5px;font-size:12.6px;letter-spacing:0.05px;color:#000">Evidence instalací pro partnery</div><div class="t" style="left:68px;top:898.5px;font-size:12.6px;letter-spacing:0.05px;color:#000">Knowledge management</div><div class="t" style="left:68px;top:916.5px;font-size:12.6px;letter-spacing:0.05px;color:#000">Správa dokumentů (DMS)</div><div class="t" style="left:68px;top:934.5px;font-size:12.6px;letter-spacing:0.05px;color:#000">Souhrnné pohledy</div><div class="t" style="left:68px;top:952.5px;font-size:12.6px;letter-spacing:0.05px;color:#000">Manažerské přehledy (BI)</div><div class="t" style="left:68px;top:970.5px;font-size:12.6px;letter-spacing:0.05px;color:#000">Správa nemovitostí</div><div class="t" style="left:68px;top:988.5px;font-size:12.6px;letter-spacing:0.05px;color:#000">Správa nemovitostí (nové)</div></div></div><div style="left:343px;top:121px;width:17px;height:877px;background:#f0f5fa"></div><div style="left:343px;top:121px;width:17px;height:17px;background:#f7fafd"></div><div style="left:343px;top:377px;width:17px;height:547px;background:#d4e4f2"></div><div style="left:343px;top:981px;width:17px;height:16px;background:#f7fafd"></div><svg style="left:343px;top:121px" width="17" height="17"><path d="M5 10.5 L8.5 7 L12 10.5" fill="none" stroke="#0a1a2a" stroke-width="2.1"/></svg><svg style="left:343px;top:981px" width="17" height="17"><path d="M5 7 L8.5 10.5 L12 7" fill="none" stroke="#0a1a2a" stroke-width="2.1"/></svg><div style="left:28px;top:998px;width:332px;height:17px;background:#f8fbfd"></div><div style="left:46px;top:998px;width:280px;height:17px;background:#f0f5fa"></div><div style="left:72px;top:998px;width:196px;height:17px;background:#d4e4f2"></div><svg style="left:28px;top:998px" width="18" height="17"><path d="M10.5 5 L7 8.5 L10.5 12" fill="none" stroke="#0a1a2a" stroke-width="2.1"/></svg><svg style="left:326px;top:998px" width="17" height="17"><path d="M7 5 L10.5 8.5 L7 12" fill="none" stroke="#0a1a2a" stroke-width="2.1"/></svg><div style="left:366px;top:72px;width:1314px;height:948px;background:#004a96"></div><svg style="left:366px;top:72px" width="1314" height="948" viewBox="0 0 1314 948"><rect x="12" y="0" width="1" height="948" fill="#fff"/><rect x="152" y="0" width="1" height="948" fill="#fff"/><rect x="292" y="0" width="1" height="948" fill="#fff"/><rect x="431" y="0" width="1" height="948" fill="#fff"/><rect x="571" y="0" width="1" height="948" fill="#fff"/><rect x="711" y="0" width="1" height="948" fill="#fff"/><rect x="851" y="0" width="1" height="948" fill="#fff"/><rect x="990" y="0" width="1" height="948" fill="#fff"/><rect x="0" y="139" width="1314" height="1" fill="#fff"/><rect x="0" y="279" width="1314" height="1" fill="#fff"/><rect x="0" y="419" width="1314" height="1" fill="#fff"/><rect x="0" y="558" width="1314" height="1" fill="#fff"/><rect x="0" y="698" width="1314" height="1" fill="#fff"/><rect x="0" y="838" width="1314" height="1" fill="#fff"/><rect x="1312" y="0" width="1" height="948" fill="#fff"/><circle cx="1060.5" cy="69" r="70" fill="#fff"/><circle cx="1060.5" cy="69" r="37" fill="#004a96"/><path d="M1060.0 32 V106 M1023.5 69.5 H1097.5" stroke="#fff" stroke-width="1"/><path d="M1084.0 70.0 L1131.0 115.5 L1105.5 139.0 L1061.0 94.0 Z" fill="#fff"/><rect x="991" y="140" width="139" height="10" fill="#004a96"/><rect x="990" y="139" width="184" height="1" fill="#fff"/><rect x="1130.00" y="0" width="1" height="948" fill="#fff"/><rect x="1138.70" y="0" width="1" height="948" fill="#fff"/><rect x="1147.40" y="0" width="1" height="948" fill="#fff"/><rect x="1156.10" y="0" width="1" height="948" fill="#fff"/><rect x="1164.80" y="0" width="1" height="948" fill="#fff"/><rect x="1173.50" y="0" width="1" height="948" fill="#fff"/><rect x="1130" y="8.50" width="44.5" height="1" fill="#fff"/><rect x="1130" y="17.20" width="44.5" height="1" fill="#fff"/><rect x="1130" y="25.90" width="44.5" height="1" fill="#fff"/><rect x="1130" y="34.60" width="44.5" height="1" fill="#fff"/><rect x="1130" y="43.30" width="44.5" height="1" fill="#fff"/><rect x="1130" y="52.00" width="44.5" height="1" fill="#fff"/><rect x="1130" y="60.70" width="44.5" height="1" fill="#fff"/><rect x="1130" y="69.40" width="44.5" height="1" fill="#fff"/><rect x="1130" y="78.10" width="44.5" height="1" fill="#fff"/><rect x="1130" y="86.80" width="44.5" height="1" fill="#fff"/><rect x="1130" y="95.50" width="44.5" height="1" fill="#fff"/><rect x="1130" y="104.20" width="44.5" height="1" fill="#fff"/><rect x="1130" y="112.90" width="44.5" height="1" fill="#fff"/><rect x="1130" y="121.60" width="44.5" height="1" fill="#fff"/><rect x="1130" y="130.30" width="44.5" height="1" fill="#fff"/><rect x="1130" y="139.00" width="44.5" height="1" fill="#fff"/><rect x="1130" y="147.70" width="44.5" height="1" fill="#fff"/><rect x="1130" y="156.40" width="44.5" height="1" fill="#fff"/><rect x="1130" y="165.10" width="44.5" height="1" fill="#fff"/><rect x="1130" y="173.80" width="44.5" height="1" fill="#fff"/><rect x="1130" y="182.50" width="44.5" height="1" fill="#fff"/><rect x="1130" y="191.20" width="44.5" height="1" fill="#fff"/><rect x="1130" y="199.90" width="44.5" height="1" fill="#fff"/><rect x="1130" y="208.60" width="44.5" height="1" fill="#fff"/><rect x="1130" y="217.30" width="44.5" height="1" fill="#fff"/><rect x="1130" y="226.00" width="44.5" height="1" fill="#fff"/><rect x="1130" y="234.70" width="44.5" height="1" fill="#fff"/><rect x="1130" y="243.40" width="44.5" height="1" fill="#fff"/><rect x="1130" y="252.10" width="44.5" height="1" fill="#fff"/><rect x="1130" y="260.80" width="44.5" height="1" fill="#fff"/><rect x="1130" y="269.50" width="44.5" height="1" fill="#fff"/><rect x="1130" y="278.20" width="44.5" height="1" fill="#fff"/><rect x="1130" y="286.90" width="44.5" height="1" fill="#fff"/><rect x="1130" y="295.60" width="44.5" height="1" fill="#fff"/><rect x="1130" y="304.30" width="44.5" height="1" fill="#fff"/><rect x="1130" y="313.00" width="44.5" height="1" fill="#fff"/><rect x="1130" y="321.70" width="44.5" height="1" fill="#fff"/><rect x="1130" y="330.40" width="44.5" height="1" fill="#fff"/><rect x="1130" y="339.10" width="44.5" height="1" fill="#fff"/><rect x="1130" y="347.80" width="44.5" height="1" fill="#fff"/><rect x="1130" y="356.50" width="44.5" height="1" fill="#fff"/><rect x="1130" y="365.20" width="44.5" height="1" fill="#fff"/><rect x="1130" y="373.90" width="44.5" height="1" fill="#fff"/><rect x="1130" y="382.60" width="44.5" height="1" fill="#fff"/><rect x="1130" y="391.30" width="44.5" height="1" fill="#fff"/><rect x="1130" y="400.00" width="44.5" height="1" fill="#fff"/><rect x="1130" y="408.70" width="44.5" height="1" fill="#fff"/><rect x="1130" y="417.40" width="44.5" height="1" fill="#fff"/><rect x="1130" y="426.10" width="44.5" height="1" fill="#fff"/><rect x="1130" y="434.80" width="44.5" height="1" fill="#fff"/><rect x="1130" y="443.50" width="44.5" height="1" fill="#fff"/><rect x="1130" y="452.20" width="44.5" height="1" fill="#fff"/><rect x="1130" y="460.90" width="44.5" height="1" fill="#fff"/><rect x="1130" y="469.60" width="44.5" height="1" fill="#fff"/><rect x="1130" y="478.30" width="44.5" height="1" fill="#fff"/><rect x="1130" y="487.00" width="44.5" height="1" fill="#fff"/><rect x="1130" y="495.70" width="44.5" height="1" fill="#fff"/><rect x="1130" y="504.40" width="44.5" height="1" fill="#fff"/><rect x="1130" y="513.10" width="44.5" height="1" fill="#fff"/><rect x="1130" y="521.80" width="44.5" height="1" fill="#fff"/><rect x="1130" y="530.50" width="44.5" height="1" fill="#fff"/><rect x="1130" y="539.20" width="44.5" height="1" fill="#fff"/><rect x="1130" y="547.90" width="44.5" height="1" fill="#fff"/><rect x="1130" y="556.60" width="44.5" height="1" fill="#fff"/><rect x="1130" y="565.30" width="44.5" height="1" fill="#fff"/><rect x="1130" y="574.00" width="44.5" height="1" fill="#fff"/><rect x="1130" y="582.70" width="44.5" height="1" fill="#fff"/><rect x="1130" y="591.40" width="44.5" height="1" fill="#fff"/><rect x="1130" y="600.10" width="44.5" height="1" fill="#fff"/><rect x="1130" y="608.80" width="44.5" height="1" fill="#fff"/><rect x="1130" y="617.50" width="44.5" height="1" fill="#fff"/><rect x="1130" y="626.20" width="44.5" height="1" fill="#fff"/><rect x="1130" y="634.90" width="44.5" height="1" fill="#fff"/><rect x="1130" y="643.60" width="44.5" height="1" fill="#fff"/><rect x="1130" y="652.30" width="44.5" height="1" fill="#fff"/><rect x="1130" y="661.00" width="44.5" height="1" fill="#fff"/><rect x="1130" y="669.70" width="44.5" height="1" fill="#fff"/><rect x="1130" y="678.40" width="44.5" height="1" fill="#fff"/><rect x="1130" y="687.10" width="44.5" height="1" fill="#fff"/><rect x="1130" y="695.80" width="44.5" height="1" fill="#fff"/><rect x="1130" y="704.50" width="44.5" height="1" fill="#fff"/><rect x="1130" y="713.20" width="44.5" height="1" fill="#fff"/><rect x="1130" y="721.90" width="44.5" height="1" fill="#fff"/><rect x="1130" y="730.60" width="44.5" height="1" fill="#fff"/><rect x="1130" y="739.30" width="44.5" height="1" fill="#fff"/><rect x="1130" y="748.00" width="44.5" height="1" fill="#fff"/><rect x="1130" y="756.70" width="44.5" height="1" fill="#fff"/><rect x="1130" y="765.40" width="44.5" height="1" fill="#fff"/><rect x="1130" y="774.10" width="44.5" height="1" fill="#fff"/><rect x="1130" y="782.80" width="44.5" height="1" fill="#fff"/><rect x="1130" y="791.50" width="44.5" height="1" fill="#fff"/><rect x="1130" y="800.20" width="44.5" height="1" fill="#fff"/><rect x="1130" y="808.90" width="44.5" height="1" fill="#fff"/><rect x="1130" y="817.60" width="44.5" height="1" fill="#fff"/><rect x="1130" y="826.30" width="44.5" height="1" fill="#fff"/><rect x="1130" y="835.00" width="44.5" height="1" fill="#fff"/><rect x="1130" y="843.70" width="44.5" height="1" fill="#fff"/><rect x="1130" y="852.40" width="44.5" height="1" fill="#fff"/><rect x="1130" y="861.10" width="44.5" height="1" fill="#fff"/><rect x="1130" y="869.80" width="44.5" height="1" fill="#fff"/><rect x="1130" y="878.50" width="44.5" height="1" fill="#fff"/><rect x="1130" y="887.20" width="44.5" height="1" fill="#fff"/><rect x="1130" y="895.90" width="44.5" height="1" fill="#fff"/><rect x="1130" y="904.60" width="44.5" height="1" fill="#fff"/><rect x="1130" y="913.30" width="44.5" height="1" fill="#fff"/><rect x="1130" y="922.00" width="44.5" height="1" fill="#fff"/><rect x="1130" y="930.70" width="44.5" height="1" fill="#fff"/><rect x="1130" y="939.40" width="44.5" height="1" fill="#fff"/><rect x="1138.5" y="0" width="36" height="34.6" fill="#fff"/><rect x="1138.5" y="43.3" width="36" height="95.7" fill="#fff"/><text x="1180.5" y="28.799999999999997" font-family="Liberation Sans" font-size="22" fill="#fff" stroke="#fff" stroke-width="0.9">CENTRÁLNÍ</text><text x="1180.5" y="51.599999999999994" font-family="Liberation Sans" font-size="22" fill="#fff" stroke="#fff" stroke-width="0.9">MOZEK</text><text x="1180.5" y="75.4" font-family="Liberation Sans" font-size="22" fill="#fff" stroke="#fff" stroke-width="0.9">FIRMY</text><defs><linearGradient id="refl" x1="0" y1="0" x2="0" y2="1"><stop offset="0" stop-color="#6a9ad0" stop-opacity="0.75"/><stop offset="1" stop-color="#004a96" stop-opacity="0"/></linearGradient></defs><g transform="translate(61.0,723.0)"><rect x="2.3" y="4" width="39.7" height="48.7" rx="3.5" fill="#fdfdfd" stroke="#d6d2ce" stroke-width="1.2"/><rect x="0" y="0" width="44" height="8.5" rx="4.2" fill="#f20d16"/><path d="M3 6 Q3 2 7 2 H19" stroke="#fff" stroke-width="1.4" fill="none" opacity="0.9"/><rect x="10.2" y="13.2" width="4.2" height="23.8" rx="2.1" fill="#686868"/><rect x="11.2" y="14.5" width="1.8" height="10" rx="0.9" fill="#fff" opacity="0.8"/><path d="M22.5 16 Q25 13.2 29 13.5 Q34.5 14 34 19.5 Q33.5 23.5 28.5 24.5 Q35 25.5 35.2 30.5 Q35 37.5 28 37.5 Q23.5 37.5 21.2 34.5" stroke="#6a6a6a" stroke-width="3.6" fill="none" stroke-linecap="round"/><path d="M12 41 h18" stroke="#8a8a8a" stroke-width="1.2" stroke-dasharray="1,0.6"/><path d="M9.5 48.5 l2 -4 l2 4 l2 -4 l2 4 l2 -4 l2 4 l2 -4 l2 4 l2 -4 l2 4 l2 -4" stroke="#8a8a8a" stroke-width="1.4" fill="none"/><rect x="2" y="54" width="40" height="10" rx="2" fill="url(#refl)"/></g><g transform="translate(200.0,721.0)"><path d="M3 6 Q2 2 7 2 L40 1.8 Q45 2 47 6 L51.5 43 Q52 50 46 50.5 L16 52 Q11 52 10 47 Z" fill="#fff" stroke="#c9c9c9" stroke-width="2.4" stroke-linejoin="round"/><rect x="8.5" y="9.5" width="10.5" height="11" rx="2.5" fill="none" stroke="#555" stroke-width="1.4" transform="rotate(-3 14 15)"/><path d="M6.5 13.5 L12.5 19.5 L22.5 8.5" stroke="#f0101c" stroke-width="3.6" fill="none" stroke-linecap="round" stroke-linejoin="round"/><path d="M11 29 Q10.5 28 12 28 L20.5 28 Q23 28 23.5 30.5 L24 36 Q24 38.5 21.5 38.5 L14 38.5 Q12.5 38.5 12.3 37 Z" fill="none" stroke="#555" stroke-width="1.4"/><path d="M24 26 L24 32 L31 32" fill="none" stroke="#555" stroke-width="1.4"/><path d="M24.5 23.5 L46.5 3 Q49.5 0.5 52.5 3.2 Q55 6 52.5 9 L30.5 30 L25 31 Z" fill="#e8101a"/><path d="M27.5 29 L50.5 7.2 L53 9 L31 30 Z" fill="#c00c12"/><path d="M24.6 24.5 L45.5 4.5" stroke="#fff" stroke-width="1.4"/><path d="M41.5 9.5 L47 4.5 L52 10 L46.5 15 Z" fill="#707070"/><path d="M47 4.5 Q50 1 53 4 Q56 7 52 10 Z" fill="#ff4668"/><rect x="8" y="54" width="42" height="10" rx="3" fill="url(#refl)"/></g><g transform="translate(337.0,724.0)"><path d="M1.8 7 V42 Q1.8 46 5.8 46 H65" stroke="#b4aca4" stroke-width="1.6" fill="none"/><rect x="7.7" y="18.4" width="8.3" height="23.2" rx="1.5" fill="#d0d0d0"/><rect x="18.1" y="7.8" width="8.3" height="33.8" rx="1.5" fill="#9a9a9a"/><rect x="28.2" y="1.9" width="8.8" height="39.7" rx="1.5" fill="#f20d16"/><rect x="38.9" y="16" width="8" height="25.6" rx="1.5" fill="#d0d0d0"/><rect x="48.9" y="11" width="9" height="30.6" rx="1.5" fill="#9a9a9a"/><path d="M9.0 23.4 V19.9 H13.2" stroke="#fff" stroke-width="1.5" fill="none"/><path d="M19.400000000000002 12.8 V9.3 H23.6" stroke="#fff" stroke-width="1.5" fill="none"/><path d="M29.5 6.9 V3.4 H33.7" stroke="#fff" stroke-width="1.5" fill="none"/><path d="M40.199999999999996 21 V17.5 H44.4" stroke="#fff" stroke-width="1.5" fill="none"/><path d="M50.199999999999996 16 V12.5 H54.4" stroke="#fff" stroke-width="1.5" fill="none"/><rect x="6" y="48.5" width="54" height="9" rx="2" fill="url(#refl)" opacity="0.8"/></g></svg><div class="t" style="left:369px;top:865.5px;width:160px;text-align:center;font-size:11px;color:#fff;letter-spacing:-0.1px">Denní plán výroby po</div><div class="t" style="left:369px;top:878.5px;width:160px;text-align:center;font-size:11px;color:#fff;letter-spacing:-0.1px">směnách</div><div class="t" style="left:512px;top:863.5px;width:160px;text-align:center;font-size:11px;color:#fff;letter-spacing:-0.1px">Plánování výroby</div><div class="t" style="left:512px;top:876.5px;width:160px;text-align:center;font-size:11px;color:#fff;letter-spacing:-0.1px">Plantune</div><div class="t" style="left:655px;top:860.5px;width:160px;text-align:center;font-size:11px;color:#fff;letter-spacing:-0.1px">Souhrnné vytížení</div><div class="t" style="left:655px;top:873.5px;width:160px;text-align:center;font-size:11px;color:#fff;letter-spacing:-0.1px">kapacit technologií</div><div style="left:386px;top:91px;width:955px;height:645px;background:#fff;border:1px solid #e4e0dc"></div><div style="left:387px;top:92px;width:953px;height:27px;background:#ebebeb;border-bottom:1px solid #d6e2f0"></div><svg style="left:390px;top:95.5px" width="18" height="19" viewBox="0 0 18 19"><path d="M2.5 2 L16 9.5 L2.5 17 Z" fill="#fefefe" stroke="#fefefe" stroke-width="1.6" stroke-linejoin="round"/><path d="M6.6 14 L13.6 10" stroke="#b4b4b4" stroke-width="1.7" stroke-linecap="round"/><path d="M3.8 5 L4.5 3" stroke="#cfcfcf" stroke-width="1"/></svg><div class="t" style="left:412px;top:98.8px;font-size:11.6px;letter-spacing:0.06px;font-weight:bold;color:#3d3d3d">Denní plán výroby po směnách</div><div class="t" style="left:1207px;top:99.6px;width:50px;text-align:right;font-size:11.5px;font-weight:bold;color:#3d3d3d">3</div><svg style="left:1267px;top:100px" width="70" height="14" viewBox="0 0 70 14"><path d="M1 5.5 H11.5" stroke="#000" stroke-width="1.6"/><rect x="26.5" y="1.5" width="9.5" height="9.5" fill="none" stroke="#000" stroke-width="1.4"/><path d="M51.5 1.5 L60.5 10.5 M60.5 1.5 L51.5 10.5" stroke="#000" stroke-width="2"/></svg><div style="left:399px;top:128px;width:789px;height:442px;border:1px solid #c8daf6;background:#f7fafe"></div><div style="left:400px;top:129px;width:770px;height:36px;background:linear-gradient(#ffffff,#eef3fa)"></div><div style="left:464px;top:129px;width:1px;height:36px;background:#dde8f6"></div><div style="left:584px;top:129px;width:1px;height:36px;background:#dde8f6"></div><div style="left:655px;top:129px;width:1px;height:36px;background:#dde8f6"></div><div style="left:793px;top:129px;width:1px;height:36px;background:#dde8f6"></div><div style="left:932px;top:129px;width:1px;height:36px;background:#dde8f6"></div><div style="left:1057px;top:129px;width:1px;height:36px;background:#dde8f6"></div><div style="left:1145px;top:129px;width:1px;height:36px;background:#dde8f6"></div><div class="t" style="left:420.5px;top:133.2px;font-size:11px;color:#1e1e1e;letter-spacing:-0.15px">Datum</div><div class="t" style="left:486px;top:133.2px;font-size:11px;color:#1e1e1e;letter-spacing:-0.15px">Název technologie</div><div class="t" style="left:587px;top:133.2px;font-size:11px;color:#1e1e1e;letter-spacing:-0.15px">Název směny</div><div class="t" style="left:658px;top:133.2px;font-size:11px;color:#1e1e1e;letter-spacing:-0.15px">Název operace</div><div class="t" style="left:796px;top:133.2px;font-size:11px;color:#1e1e1e;letter-spacing:-0.15px">Název výrobku</div><div class="t" style="left:935px;top:133.2px;font-size:11px;color:#1e1e1e;letter-spacing:-0.15px">Mzdový lístek</div><div class="t" style="left:1060.5px;top:133.2px;font-size:11px;color:#1e1e1e;letter-spacing:-0.15px">Spotřeba času</div><div class="t" style="left:1060.5px;top:146.2px;font-size:11px;color:#1e1e1e;letter-spacing:-0.15px">plánovaná</div><div class="t" style="left:1147.5px;top:133.2px;font-size:11px;color:#1e1e1e;letter-spacing:-0.15px">Výr</div><div class="t" style="left:1147.5px;top:146.2px;font-size:11px;color:#1e1e1e;letter-spacing:-0.15px">o...</div><div class="t" style="left:403px;top:134px;font-size:9px;color:#62a6dc">1</div><svg style="left:408px;top:134px" width="10" height="9"><path d="M0.5 8.5 L4.5 0.8 L8.5 8.5 Z" fill="#d9d9d9" stroke="#a9a9a9" stroke-width="0.8"/></svg><div class="t" style="left:469.5px;top:134px;font-size:9px;color:#62a6dc">2</div><svg style="left:474.5px;top:134px" width="10" height="9"><path d="M0.5 8.5 L4.5 0.8 L8.5 8.5 Z" fill="#d9d9d9" stroke="#a9a9a9" stroke-width="0.8"/></svg><div style="left:400px;top:165px;width:770px;height:378px;overflow:hidden"><div style="left:-400px;top:-165px;width:1200px;height:600px"><div style="left:400px;top:165px;width:770px;height:18px;background:#00476e"></div><div style="left:464px;top:165px;width:1px;height:18px;background:rgba(255,255,255,0.75)"></div><div style="left:584px;top:165px;width:1px;height:18px;background:rgba(255,255,255,0.75)"></div><div style="left:655px;top:165px;width:1px;height:18px;background:rgba(255,255,255,0.75)"></div><div style="left:793px;top:165px;width:1px;height:18px;background:rgba(255,255,255,0.75)"></div><div style="left:932px;top:165px;width:1px;height:18px;background:rgba(255,255,255,0.75)"></div><div style="left:1057px;top:165px;width:1px;height:18px;background:rgba(255,255,255,0.75)"></div><div style="left:1145px;top:165px;width:1px;height:18px;background:rgba(255,255,255,0.75)"></div><div class="t" style="left:402px;top:169.3px;font-size:11px;letter-spacing:0px;color:#fff">28.03.2018</div><div class="t" style="left:466px;top:169.3px;font-size:11px;letter-spacing:-0.3px;color:#fff">Montáž</div><div class="t" style="left:586px;top:169.3px;font-size:11px;letter-spacing:-0.3px;color:#fff">první směna</div><div class="t" style="left:657px;top:169.3px;font-size:11px;letter-spacing:-0.3px;color:#fff">Kompletace kola</div><div class="t" style="left:795px;top:169.3px;font-size:11px;letter-spacing:-0.3px;color:#fff">Horské kolo XC Basic 21"</div><div class="t" style="left:934px;top:169.3px;font-size:11px;letter-spacing:0px;color:#fff">ML-2018-0000146</div><div class="t" style="left:1057px;top:169.3px;width:84px;text-align:right;font-size:11px;letter-spacing:0px;color:#fff">11,33</div><div class="t" style="left:1147.5px;top:169.3px;font-size:11px;letter-spacing:-0.3px;color:#fff">VP-2</div><div style="left:400px;top:183px;width:770px;height:18px;background:#dfeafc"></div><div style="left:464px;top:183px;width:1px;height:18px;background:rgba(255,255,255,0.75)"></div><div style="left:584px;top:183px;width:1px;height:18px;background:rgba(255,255,255,0.75)"></div><div style="left:655px;top:183px;width:1px;height:18px;background:rgba(255,255,255,0.75)"></div><div style="left:793px;top:183px;width:1px;height:18px;background:rgba(255,255,255,0.75)"></div><div style="left:932px;top:183px;width:1px;height:18px;background:rgba(255,255,255,0.75)"></div><div style="left:1057px;top:183px;width:1px;height:18px;background:rgba(255,255,255,0.75)"></div><div style="left:1145px;top:183px;width:1px;height:18px;background:rgba(255,255,255,0.75)"></div><div class="t" style="left:402px;top:187.3px;font-size:11px;letter-spacing:0px;color:#000">28.03.2018</div><div class="t" style="left:466px;top:187.3px;font-size:11px;letter-spacing:-0.3px;color:#000">Montáž</div><div class="t" style="left:586px;top:187.3px;font-size:11px;letter-spacing:-0.3px;color:#000">první směna</div><div class="t" style="left:657px;top:187.3px;font-size:11px;letter-spacing:-0.3px;color:#000">Montáž patky</div><div class="t" style="left:795px;top:187.3px;font-size:11px;letter-spacing:-0.3px;color:#000">Horské kolo XC Basic 19"</div><div class="t" style="left:934px;top:187.3px;font-size:11px;letter-spacing:0px;color:#000">ML-2018-0000177</div><div class="t" style="left:1057px;top:187.3px;width:84px;text-align:right;font-size:11px;letter-spacing:0px;color:#000">0,08</div><div class="t" style="left:1147.5px;top:187.3px;font-size:11px;letter-spacing:-0.3px;color:#000">VP-2</div><div style="left:400px;top:201px;width:770px;height:18px;background:#c9dcf8"></div><div style="left:464px;top:201px;width:1px;height:18px;background:rgba(255,255,255,0.75)"></div><div style="left:584px;top:201px;width:1px;height:18px;background:rgba(255,255,255,0.75)"></div><div style="left:655px;top:201px;width:1px;height:18px;background:rgba(255,255,255,0.75)"></div><div style="left:793px;top:201px;width:1px;height:18px;background:rgba(255,255,255,0.75)"></div><div style="left:932px;top:201px;width:1px;height:18px;background:rgba(255,255,255,0.75)"></div><div style="left:1057px;top:201px;width:1px;height:18px;background:rgba(255,255,255,0.75)"></div><div style="left:1145px;top:201px;width:1px;height:18px;background:rgba(255,255,255,0.75)"></div><div class="t" style="left:402px;top:205.3px;font-size:11px;letter-spacing:0px;color:#000">28.03.2018</div><div class="t" style="left:466px;top:205.3px;font-size:11px;letter-spacing:-0.3px;color:#000">Svařovna a brusírna</div><div class="t" style="left:586px;top:205.3px;font-size:11px;letter-spacing:-0.3px;color:#000">první směna</div><div class="t" style="left:657px;top:205.3px;font-size:11px;letter-spacing:-0.3px;color:#000">Broušení svárů rámu</div><div class="t" style="left:795px;top:205.3px;font-size:11px;letter-spacing:-0.3px;color:#000">Horské kolo XC Basic 19"</div><div class="t" style="left:934px;top:205.3px;font-size:11px;letter-spacing:0px;color:#000">ML-2018-0000178</div><div class="t" style="left:1057px;top:205.3px;width:84px;text-align:right;font-size:11px;letter-spacing:0px;color:#000">0,92</div><div class="t" style="left:1147.5px;top:205.3px;font-size:11px;letter-spacing:-0.3px;color:#000">VP-2</div><div style="left:400px;top:219px;width:770px;height:18px;background:#dfeafc"></div><div style="left:464px;top:219px;width:1px;height:18px;background:rgba(255,255,255,0.75)"></div><div style="left:584px;top:219px;width:1px;height:18px;background:rgba(255,255,255,0.75)"></div><div style="left:655px;top:219px;width:1px;height:18px;background:rgba(255,255,255,0.75)"></div><div style="left:793px;top:219px;width:1px;height:18px;background:rgba(255,255,255,0.75)"></div><div style="left:932px;top:219px;width:1px;height:18px;background:rgba(255,255,255,0.75)"></div><div style="left:1057px;top:219px;width:1px;height:18px;background:rgba(255,255,255,0.75)"></div><div style="left:1145px;top:219px;width:1px;height:18px;background:rgba(255,255,255,0.75)"></div><div class="t" style="left:402px;top:223.3px;font-size:11px;letter-spacing:0px;color:#000">29.03.2018</div><div class="t" style="left:466px;top:223.3px;font-size:11px;letter-spacing:-0.3px;color:#000">Lakovna</div><div class="t" style="left:586px;top:223.3px;font-size:11px;letter-spacing:-0.3px;color:#000">první směna</div><div class="t" style="left:657px;top:223.3px;font-size:11px;letter-spacing:-0.3px;color:#000">Povrchové úpravy</div><div class="t" style="left:795px;top:223.3px;font-size:11px;letter-spacing:-0.3px;color:#000">Horské kolo XC Basic 17"</div><div class="t" style="left:934px;top:223.3px;font-size:11px;letter-spacing:0px;color:#000">ML-2018-0000205</div><div class="t" style="left:1057px;top:223.3px;width:84px;text-align:right;font-size:11px;letter-spacing:0px;color:#000">1,17</div><div class="t" style="left:1147.5px;top:223.3px;font-size:11px;letter-spacing:-0.3px;color:#000">VP-2</div><div style="left:400px;top:237px;width:770px;height:18px;background:#c9dcf8"></div><div style="left:464px;top:237px;width:1px;height:18px;background:rgba(255,255,255,0.75)"></div><div style="left:584px;top:237px;width:1px;height:18px;background:rgba(255,255,255,0.75)"></div><div style="left:655px;top:237px;width:1px;height:18px;background:rgba(255,255,255,0.75)"></div><div style="left:793px;top:237px;width:1px;height:18px;background:rgba(255,255,255,0.75)"></div><div style="left:932px;top:237px;width:1px;height:18px;background:rgba(255,255,255,0.75)"></div><div style="left:1057px;top:237px;width:1px;height:18px;background:rgba(255,255,255,0.75)"></div><div style="left:1145px;top:237px;width:1px;height:18px;background:rgba(255,255,255,0.75)"></div><div class="t" style="left:402px;top:241.3px;font-size:11px;letter-spacing:0px;color:#000">29.03.2018</div><div class="t" style="left:466px;top:241.3px;font-size:11px;letter-spacing:-0.3px;color:#000">Montáž</div><div class="t" style="left:586px;top:241.3px;font-size:11px;letter-spacing:-0.3px;color:#000">první směna</div><div class="t" style="left:657px;top:241.3px;font-size:11px;letter-spacing:-0.3px;color:#000">Kompletace sedla</div><div class="t" style="left:795px;top:241.3px;font-size:11px;letter-spacing:-0.3px;color:#000">Horské kolo XC Basic 19"</div><div class="t" style="left:934px;top:241.3px;font-size:11px;letter-spacing:0px;color:#000">ML-2018-0000184</div><div class="t" style="left:1057px;top:241.3px;width:84px;text-align:right;font-size:11px;letter-spacing:0px;color:#000">0,17</div><div class="t" style="left:1147.5px;top:241.3px;font-size:11px;letter-spacing:-0.3px;color:#000">VP-2</div><div style="left:400px;top:255px;width:770px;height:18px;background:#dfeafc"></div><div style="left:464px;top:255px;width:1px;height:18px;background:rgba(255,255,255,0.75)"></div><div style="left:584px;top:255px;width:1px;height:18px;background:rgba(255,255,255,0.75)"></div><div style="left:655px;top:255px;width:1px;height:18px;background:rgba(255,255,255,0.75)"></div><div style="left:793px;top:255px;width:1px;height:18px;background:rgba(255,255,255,0.75)"></div><div style="left:932px;top:255px;width:1px;height:18px;background:rgba(255,255,255,0.75)"></div><div style="left:1057px;top:255px;width:1px;height:18px;background:rgba(255,255,255,0.75)"></div><div style="left:1145px;top:255px;width:1px;height:18px;background:rgba(255,255,255,0.75)"></div><div class="t" style="left:402px;top:259.3px;font-size:11px;letter-spacing:0px;color:#000">29.03.2018</div><div class="t" style="left:466px;top:259.3px;font-size:11px;letter-spacing:-0.3px;color:#000">Montáž</div><div class="t" style="left:586px;top:259.3px;font-size:11px;letter-spacing:-0.3px;color:#000">první směna</div><div class="t" style="left:657px;top:259.3px;font-size:11px;letter-spacing:-0.3px;color:#000">Montáž zadního kola</div><div class="t" style="left:795px;top:259.3px;font-size:11px;letter-spacing:-0.3px;color:#000">Horské kolo XC Basic 19"</div><div class="t" style="left:934px;top:259.3px;font-size:11px;letter-spacing:0px;color:#000">ML-2018-0000183</div><div class="t" style="left:1057px;top:259.3px;width:84px;text-align:right;font-size:11px;letter-spacing:0px;color:#000">7,17</div><div class="t" style="left:1147.5px;top:259.3px;font-size:11px;letter-spacing:-0.3px;color:#000">VP-2</div><div style="left:400px;top:273px;width:770px;height:18px;background:#c9dcf8"></div><div style="left:464px;top:273px;width:1px;height:18px;background:rgba(255,255,255,0.75)"></div><div style="left:584px;top:273px;width:1px;height:18px;background:rgba(255,255,255,0.75)"></div><div style="left:655px;top:273px;width:1px;height:18px;background:rgba(255,255,255,0.75)"></div><div style="left:793px;top:273px;width:1px;height:18px;background:rgba(255,255,255,0.75)"></div><div style="left:932px;top:273px;width:1px;height:18px;background:rgba(255,255,255,0.75)"></div><div style="left:1057px;top:273px;width:1px;height:18px;background:rgba(255,255,255,0.75)"></div><div style="left:1145px;top:273px;width:1px;height:18px;background:rgba(255,255,255,0.75)"></div><div class="t" style="left:402px;top:277.3px;font-size:11px;letter-spacing:0px;color:#000">29.03.2018</div><div class="t" style="left:466px;top:277.3px;font-size:11px;letter-spacing:-0.3px;color:#000">Montáž</div><div class="t" style="left:586px;top:277.3px;font-size:11px;letter-spacing:-0.3px;color:#000">první směna</div><div class="t" style="left:657px;top:277.3px;font-size:11px;letter-spacing:-0.3px;color:#000">Kompletace kola</div><div class="t" style="left:795px;top:277.3px;font-size:11px;letter-spacing:-0.3px;color:#000">Horské kolo XC Basic 21"</div><div class="t" style="left:934px;top:277.3px;font-size:11px;letter-spacing:0px;color:#000">ML-2018-0000146</div><div class="t" style="left:1057px;top:277.3px;width:84px;text-align:right;font-size:11px;letter-spacing:0px;color:#000">9,33</div><div class="t" style="left:1147.5px;top:277.3px;font-size:11px;letter-spacing:-0.3px;color:#000">VP-2</div><div style="left:400px;top:291px;width:770px;height:18px;background:#dfeafc"></div><div style="left:464px;top:291px;width:1px;height:18px;background:rgba(255,255,255,0.75)"></div><div style="left:584px;top:291px;width:1px;height:18px;background:rgba(255,255,255,0.75)"></div><div style="left:655px;top:291px;width:1px;height:18px;background:rgba(255,255,255,0.75)"></div><div style="left:793px;top:291px;width:1px;height:18px;background:rgba(255,255,255,0.75)"></div><div style="left:932px;top:291px;width:1px;height:18px;background:rgba(255,255,255,0.75)"></div><div style="left:1057px;top:291px;width:1px;height:18px;background:rgba(255,255,255,0.75)"></div><div style="left:1145px;top:291px;width:1px;height:18px;background:rgba(255,255,255,0.75)"></div><div class="t" style="left:402px;top:295.3px;font-size:11px;letter-spacing:0px;color:#000">29.03.2018</div><div class="t" style="left:466px;top:295.3px;font-size:11px;letter-spacing:-0.3px;color:#000">Montáž</div><div class="t" style="left:586px;top:295.3px;font-size:11px;letter-spacing:-0.3px;color:#000">první směna</div><div class="t" style="left:657px;top:295.3px;font-size:11px;letter-spacing:-0.3px;color:#000">Montáž patky</div><div class="t" style="left:795px;top:295.3px;font-size:11px;letter-spacing:-0.3px;color:#000">Horské kolo XC Basic 17"</div><div class="t" style="left:934px;top:295.3px;font-size:11px;letter-spacing:0px;color:#000">ML-2018-0000206</div><div class="t" style="left:1057px;top:295.3px;width:84px;text-align:right;font-size:11px;letter-spacing:0px;color:#000">0,33</div><div class="t" style="left:1147.5px;top:295.3px;font-size:11px;letter-spacing:-0.3px;color:#000">VP-2</div><div style="left:400px;top:309px;width:770px;height:18px;background:#c9dcf8"></div><div style="left:464px;top:309px;width:1px;height:18px;background:rgba(255,255,255,0.75)"></div><div style="left:584px;top:309px;width:1px;height:18px;background:rgba(255,255,255,0.75)"></div><div style="left:655px;top:309px;width:1px;height:18px;background:rgba(255,255,255,0.75)"></div><div style="left:793px;top:309px;width:1px;height:18px;background:rgba(255,255,255,0.75)"></div><div style="left:932px;top:309px;width:1px;height:18px;background:rgba(255,255,255,0.75)"></div><div style="left:1057px;top:309px;width:1px;height:18px;background:rgba(255,255,255,0.75)"></div><div style="left:1145px;top:309px;width:1px;height:18px;background:rgba(255,255,255,0.75)"></div><div class="t" style="left:402px;top:313.3px;font-size:11px;letter-spacing:0px;color:#000">29.03.2018</div><div class="t" style="left:466px;top:313.3px;font-size:11px;letter-spacing:-0.3px;color:#000">Svařovna a brusírna</div><div class="t" style="left:586px;top:313.3px;font-size:11px;letter-spacing:-0.3px;color:#000">první směna</div><div class="t" style="left:657px;top:313.3px;font-size:11px;letter-spacing:-0.3px;color:#000">Svařování rámu</div><div class="t" style="left:795px;top:313.3px;font-size:11px;letter-spacing:-0.3px;color:#000">Horské kolo XC Basic 19"</div><div class="t" style="left:934px;top:313.3px;font-size:11px;letter-spacing:0px;color:#000">ML-2018-0000179</div><div class="t" style="left:1057px;top:313.3px;width:84px;text-align:right;font-size:11px;letter-spacing:0px;color:#000">16,75</div><div class="t" style="left:1147.5px;top:313.3px;font-size:11px;letter-spacing:-0.3px;color:#000">VP-2</div><div style="left:400px;top:327px;width:770px;height:18px;background:#dfeafc"></div><div style="left:464px;top:327px;width:1px;height:18px;background:rgba(255,255,255,0.75)"></div><div style="left:584px;top:327px;width:1px;height:18px;background:rgba(255,255,255,0.75)"></div><div style="left:655px;top:327px;width:1px;height:18px;background:rgba(255,255,255,0.75)"></div><div style="left:793px;top:327px;width:1px;height:18px;background:rgba(255,255,255,0.75)"></div><div style="left:932px;top:327px;width:1px;height:18px;background:rgba(255,255,255,0.75)"></div><div style="left:1057px;top:327px;width:1px;height:18px;background:rgba(255,255,255,0.75)"></div><div style="left:1145px;top:327px;width:1px;height:18px;background:rgba(255,255,255,0.75)"></div><div class="t" style="left:402px;top:331.3px;font-size:11px;letter-spacing:0px;color:#000">30.03.2018</div><div class="t" style="left:466px;top:331.3px;font-size:11px;letter-spacing:-0.3px;color:#000">Frézování</div><div class="t" style="left:586px;top:331.3px;font-size:11px;letter-spacing:-0.3px;color:#000">první směna</div><div class="t" style="left:657px;top:331.3px;font-size:11px;letter-spacing:-0.3px;color:#000">Frézování patky</div><div class="t" style="left:795px;top:331.3px;font-size:11px;letter-spacing:-0.3px;color:#000">Horské kolo XC Basic 19"</div><div class="t" style="left:934px;top:331.3px;font-size:11px;letter-spacing:0px;color:#000">ML-2018-0000199</div><div class="t" style="left:1057px;top:331.3px;width:84px;text-align:right;font-size:11px;letter-spacing:0px;color:#000">0,21</div><div class="t" style="left:1147.5px;top:331.3px;font-size:11px;letter-spacing:-0.3px;color:#000">VP-2</div><div style="left:400px;top:345px;width:770px;height:18px;background:#c9dcf8"></div><div style="left:464px;top:345px;width:1px;height:18px;background:rgba(255,255,255,0.75)"></div><div style="left:584px;top:345px;width:1px;height:18px;background:rgba(255,255,255,0.75)"></div><div style="left:655px;top:345px;width:1px;height:18px;background:rgba(255,255,255,0.75)"></div><div style="left:793px;top:345px;width:1px;height:18px;background:rgba(255,255,255,0.75)"></div><div style="left:932px;top:345px;width:1px;height:18px;background:rgba(255,255,255,0.75)"></div><div style="left:1057px;top:345px;width:1px;height:18px;background:rgba(255,255,255,0.75)"></div><div style="left:1145px;top:345px;width:1px;height:18px;background:rgba(255,255,255,0.75)"></div><div class="t" style="left:402px;top:349.3px;font-size:11px;letter-spacing:0px;color:#000">30.03.2018</div><div class="t" style="left:466px;top:349.3px;font-size:11px;letter-spacing:-0.3px;color:#000">Frézování</div><div class="t" style="left:586px;top:349.3px;font-size:11px;letter-spacing:-0.3px;color:#000">první směna</div><div class="t" style="left:657px;top:349.3px;font-size:11px;letter-spacing:-0.3px;color:#000">Frézování patky</div><div class="t" style="left:795px;top:349.3px;font-size:11px;letter-spacing:-0.3px;color:#000">Horské kolo XC Basic 19"</div><div class="t" style="left:934px;top:349.3px;font-size:11px;letter-spacing:0px;color:#000">ML-2018-0000202</div><div class="t" style="left:1057px;top:349.3px;width:84px;text-align:right;font-size:11px;letter-spacing:0px;color:#000">0,21</div><div class="t" style="left:1147.5px;top:349.3px;font-size:11px;letter-spacing:-0.3px;color:#000">VP-2</div><div style="left:400px;top:363px;width:770px;height:18px;background:#dfeafc"></div><div style="left:464px;top:363px;width:1px;height:18px;background:rgba(255,255,255,0.75)"></div><div style="left:584px;top:363px;width:1px;height:18px;background:rgba(255,255,255,0.75)"></div><div style="left:655px;top:363px;width:1px;height:18px;background:rgba(255,255,255,0.75)"></div><div style="left:793px;top:363px;width:1px;height:18px;background:rgba(255,255,255,0.75)"></div><div style="left:932px;top:363px;width:1px;height:18px;background:rgba(255,255,255,0.75)"></div><div style="left:1057px;top:363px;width:1px;height:18px;background:rgba(255,255,255,0.75)"></div><div style="left:1145px;top:363px;width:1px;height:18px;background:rgba(255,255,255,0.75)"></div><div class="t" style="left:402px;top:367.3px;font-size:11px;letter-spacing:0px;color:#000">30.03.2018</div><div class="t" style="left:466px;top:367.3px;font-size:11px;letter-spacing:-0.3px;color:#000">Montáž</div><div class="t" style="left:586px;top:367.3px;font-size:11px;letter-spacing:-0.3px;color:#000">první směna</div><div class="t" style="left:657px;top:367.3px;font-size:11px;letter-spacing:-0.3px;color:#000">Kompletace sedla</div><div class="t" style="left:795px;top:367.3px;font-size:11px;letter-spacing:-0.3px;color:#000">Horské kolo XC Basic 17"</div><div class="t" style="left:934px;top:367.3px;font-size:11px;letter-spacing:0px;color:#000">ML-2018-0000185</div><div class="t" style="left:1057px;top:367.3px;width:84px;text-align:right;font-size:11px;letter-spacing:0px;color:#000">0,17</div><div class="t" style="left:1147.5px;top:367.3px;font-size:11px;letter-spacing:-0.3px;color:#000">VP-2</div><div style="left:400px;top:381px;width:770px;height:18px;background:#c9dcf8"></div><div style="left:464px;top:381px;width:1px;height:18px;background:rgba(255,255,255,0.75)"></div><div style="left:584px;top:381px;width:1px;height:18px;background:rgba(255,255,255,0.75)"></div><div style="left:655px;top:381px;width:1px;height:18px;background:rgba(255,255,255,0.75)"></div><div style="left:793px;top:381px;width:1px;height:18px;background:rgba(255,255,255,0.75)"></div><div style="left:932px;top:381px;width:1px;height:18px;background:rgba(255,255,255,0.75)"></div><div style="left:1057px;top:381px;width:1px;height:18px;background:rgba(255,255,255,0.75)"></div><div style="left:1145px;top:381px;width:1px;height:18px;background:rgba(255,255,255,0.75)"></div><div class="t" style="left:402px;top:385.3px;font-size:11px;letter-spacing:0px;color:#000">30.03.2018</div><div class="t" style="left:466px;top:385.3px;font-size:11px;letter-spacing:-0.3px;color:#000">Montáž</div><div class="t" style="left:586px;top:385.3px;font-size:11px;letter-spacing:-0.3px;color:#000">první směna</div><div class="t" style="left:657px;top:385.3px;font-size:11px;letter-spacing:-0.3px;color:#000">Montáž zadního kola</div><div class="t" style="left:795px;top:385.3px;font-size:11px;letter-spacing:-0.3px;color:#000">Horské kolo XC Basic 17"</div><div class="t" style="left:934px;top:385.3px;font-size:11px;letter-spacing:0px;color:#000">ML-2018-0000186</div><div class="t" style="left:1057px;top:385.3px;width:84px;text-align:right;font-size:11px;letter-spacing:0px;color:#000">7,17</div><div class="t" style="left:1147.5px;top:385.3px;font-size:11px;letter-spacing:-0.3px;color:#000">VP-2</div><div style="left:400px;top:399px;width:770px;height:18px;background:#dfeafc"></div><div style="left:464px;top:399px;width:1px;height:18px;background:rgba(255,255,255,0.75)"></div><div style="left:584px;top:399px;width:1px;height:18px;background:rgba(255,255,255,0.75)"></div><div style="left:655px;top:399px;width:1px;height:18px;background:rgba(255,255,255,0.75)"></div><div style="left:793px;top:399px;width:1px;height:18px;background:rgba(255,255,255,0.75)"></div><div style="left:932px;top:399px;width:1px;height:18px;background:rgba(255,255,255,0.75)"></div><div style="left:1057px;top:399px;width:1px;height:18px;background:rgba(255,255,255,0.75)"></div><div style="left:1145px;top:399px;width:1px;height:18px;background:rgba(255,255,255,0.75)"></div><div class="t" style="left:402px;top:403.3px;font-size:11px;letter-spacing:0px;color:#000">30.03.2018</div><div class="t" style="left:466px;top:403.3px;font-size:11px;letter-spacing:-0.3px;color:#000">Montáž</div><div class="t" style="left:586px;top:403.3px;font-size:11px;letter-spacing:-0.3px;color:#000">první směna</div><div class="t" style="left:657px;top:403.3px;font-size:11px;letter-spacing:-0.3px;color:#000">Montáž předního kola</div><div class="t" style="left:795px;top:403.3px;font-size:11px;letter-spacing:-0.3px;color:#000">Horské kolo XC Basic 19"</div><div class="t" style="left:934px;top:403.3px;font-size:11px;letter-spacing:0px;color:#000">ML-2018-0000187</div><div class="t" style="left:1057px;top:403.3px;width:84px;text-align:right;font-size:11px;letter-spacing:0px;color:#000">0,50</div><div class="t" style="left:1147.5px;top:403.3px;font-size:11px;letter-spacing:-0.3px;color:#000">VP-2</div><div style="left:400px;top:417px;width:770px;height:18px;background:#c9dcf8"></div><div style="left:464px;top:417px;width:1px;height:18px;background:rgba(255,255,255,0.75)"></div><div style="left:584px;top:417px;width:1px;height:18px;background:rgba(255,255,255,0.75)"></div><div style="left:655px;top:417px;width:1px;height:18px;background:rgba(255,255,255,0.75)"></div><div style="left:793px;top:417px;width:1px;height:18px;background:rgba(255,255,255,0.75)"></div><div style="left:932px;top:417px;width:1px;height:18px;background:rgba(255,255,255,0.75)"></div><div style="left:1057px;top:417px;width:1px;height:18px;background:rgba(255,255,255,0.75)"></div><div style="left:1145px;top:417px;width:1px;height:18px;background:rgba(255,255,255,0.75)"></div><div class="t" style="left:402px;top:421.3px;font-size:11px;letter-spacing:0px;color:#000">30.03.2018</div><div class="t" style="left:466px;top:421.3px;font-size:11px;letter-spacing:-0.3px;color:#000">Montáž</div><div class="t" style="left:586px;top:421.3px;font-size:11px;letter-spacing:-0.3px;color:#000">první směna</div><div class="t" style="left:657px;top:421.3px;font-size:11px;letter-spacing:-0.3px;color:#000">Kompletace kola</div><div class="t" style="left:795px;top:421.3px;font-size:11px;letter-spacing:-0.3px;color:#000">Horské kolo XC Basic 19"</div><div class="t" style="left:934px;top:421.3px;font-size:11px;letter-spacing:0px;color:#000">ML-2018-0000188</div><div class="t" style="left:1057px;top:421.3px;width:84px;text-align:right;font-size:11px;letter-spacing:0px;color:#000">9,33</div><div class="t" style="left:1147.5px;top:421.3px;font-size:11px;letter-spacing:-0.3px;color:#000">VP-2</div><div style="left:400px;top:435px;width:770px;height:18px;background:#dfeafc"></div><div style="left:464px;top:435px;width:1px;height:18px;background:rgba(255,255,255,0.75)"></div><div style="left:584px;top:435px;width:1px;height:18px;background:rgba(255,255,255,0.75)"></div><div style="left:655px;top:435px;width:1px;height:18px;background:rgba(255,255,255,0.75)"></div><div style="left:793px;top:435px;width:1px;height:18px;background:rgba(255,255,255,0.75)"></div><div style="left:932px;top:435px;width:1px;height:18px;background:rgba(255,255,255,0.75)"></div><div style="left:1057px;top:435px;width:1px;height:18px;background:rgba(255,255,255,0.75)"></div><div style="left:1145px;top:435px;width:1px;height:18px;background:rgba(255,255,255,0.75)"></div><div class="t" style="left:402px;top:439.3px;font-size:11px;letter-spacing:0px;color:#000">30.03.2018</div><div class="t" style="left:466px;top:439.3px;font-size:11px;letter-spacing:-0.3px;color:#000">Montáž</div><div class="t" style="left:586px;top:439.3px;font-size:11px;letter-spacing:-0.3px;color:#000">první směna</div><div class="t" style="left:657px;top:439.3px;font-size:11px;letter-spacing:-0.3px;color:#000">Montáž řízení</div><div class="t" style="left:795px;top:439.3px;font-size:11px;letter-spacing:-0.3px;color:#000">Horské kolo XC Basic 19"</div><div class="t" style="left:934px;top:439.3px;font-size:11px;letter-spacing:0px;color:#000">ML-2018-0000189</div><div class="t" style="left:1057px;top:439.3px;width:84px;text-align:right;font-size:11px;letter-spacing:0px;color:#000">0,33</div><div class="t" style="left:1147.5px;top:439.3px;font-size:11px;letter-spacing:-0.3px;color:#000">VP-2</div><div style="left:400px;top:453px;width:770px;height:18px;background:#c9dcf8"></div><div style="left:464px;top:453px;width:1px;height:18px;background:rgba(255,255,255,0.75)"></div><div style="left:584px;top:453px;width:1px;height:18px;background:rgba(255,255,255,0.75)"></div><div style="left:655px;top:453px;width:1px;height:18px;background:rgba(255,255,255,0.75)"></div><div style="left:793px;top:453px;width:1px;height:18px;background:rgba(255,255,255,0.75)"></div><div style="left:932px;top:453px;width:1px;height:18px;background:rgba(255,255,255,0.75)"></div><div style="left:1057px;top:453px;width:1px;height:18px;background:rgba(255,255,255,0.75)"></div><div style="left:1145px;top:453px;width:1px;height:18px;background:rgba(255,255,255,0.75)"></div><div class="t" style="left:402px;top:457.3px;font-size:11px;letter-spacing:0px;color:#000">30.03.2018</div><div class="t" style="left:466px;top:457.3px;font-size:11px;letter-spacing:-0.3px;color:#000">Montáž</div><div class="t" style="left:586px;top:457.3px;font-size:11px;letter-spacing:-0.3px;color:#000">první směna</div><div class="t" style="left:657px;top:457.3px;font-size:11px;letter-spacing:-0.3px;color:#000">Montáž zadního kola</div><div class="t" style="left:795px;top:457.3px;font-size:11px;letter-spacing:-0.3px;color:#000">Horské kolo XC Basic 19"</div><div class="t" style="left:934px;top:457.3px;font-size:11px;letter-spacing:0px;color:#000">ML-2018-0000190</div><div class="t" style="left:1057px;top:457.3px;width:84px;text-align:right;font-size:11px;letter-spacing:0px;color:#000">7,17</div><div class="t" style="left:1147.5px;top:457.3px;font-size:11px;letter-spacing:-0.3px;color:#000">VP-2</div><div style="left:400px;top:471px;width:770px;height:18px;background:#dfeafc"></div><div style="left:464px;top:471px;width:1px;height:18px;background:rgba(255,255,255,0.75)"></div><div style="left:584px;top:471px;width:1px;height:18px;background:rgba(255,255,255,0.75)"></div><div style="left:655px;top:471px;width:1px;height:18px;background:rgba(255,255,255,0.75)"></div><div style="left:793px;top:471px;width:1px;height:18px;background:rgba(255,255,255,0.75)"></div><div style="left:932px;top:471px;width:1px;height:18px;background:rgba(255,255,255,0.75)"></div><div style="left:1057px;top:471px;width:1px;height:18px;background:rgba(255,255,255,0.75)"></div><div style="left:1145px;top:471px;width:1px;height:18px;background:rgba(255,255,255,0.75)"></div><div class="t" style="left:402px;top:475.3px;font-size:11px;letter-spacing:0px;color:#000">30.03.2018</div><div class="t" style="left:466px;top:475.3px;font-size:11px;letter-spacing:-0.3px;color:#000">Montáž</div><div class="t" style="left:586px;top:475.3px;font-size:11px;letter-spacing:-0.3px;color:#000">první směna</div><div class="t" style="left:657px;top:475.3px;font-size:11px;letter-spacing:-0.3px;color:#000">Kompletace kola</div><div class="t" style="left:795px;top:475.3px;font-size:11px;letter-spacing:-0.3px;color:#000">Horské kolo XC Basic 21"</div><div class="t" style="left:934px;top:475.3px;font-size:11px;letter-spacing:0px;color:#000">ML-2018-0000191</div><div class="t" style="left:1057px;top:475.3px;width:84px;text-align:right;font-size:11px;letter-spacing:0px;color:#000">9,33</div><div class="t" style="left:1147.5px;top:475.3px;font-size:11px;letter-spacing:-0.3px;color:#000">VP-2</div><div style="left:400px;top:489px;width:770px;height:18px;background:#c9dcf8"></div><div style="left:464px;top:489px;width:1px;height:18px;background:rgba(255,255,255,0.75)"></div><div style="left:584px;top:489px;width:1px;height:18px;background:rgba(255,255,255,0.75)"></div><div style="left:655px;top:489px;width:1px;height:18px;background:rgba(255,255,255,0.75)"></div><div style="left:793px;top:489px;width:1px;height:18px;background:rgba(255,255,255,0.75)"></div><div style="left:932px;top:489px;width:1px;height:18px;background:rgba(255,255,255,0.75)"></div><div style="left:1057px;top:489px;width:1px;height:18px;background:rgba(255,255,255,0.75)"></div><div style="left:1145px;top:489px;width:1px;height:18px;background:rgba(255,255,255,0.75)"></div><div class="t" style="left:402px;top:493.3px;font-size:11px;letter-spacing:0px;color:#000">30.03.2018</div><div class="t" style="left:466px;top:493.3px;font-size:11px;letter-spacing:-0.3px;color:#000">Obrábění kovů (řezání)</div><div class="t" style="left:586px;top:493.3px;font-size:11px;letter-spacing:-0.3px;color:#000">první směna</div><div class="t" style="left:657px;top:493.3px;font-size:11px;letter-spacing:-0.3px;color:#000">Řezání trubky</div><div class="t" style="left:795px;top:493.3px;font-size:11px;letter-spacing:-0.3px;color:#000">Horské kolo XC Basic 19"</div><div class="t" style="left:934px;top:493.3px;font-size:11px;letter-spacing:0px;color:#000">ML-2018-0000192</div><div class="t" style="left:1057px;top:493.3px;width:84px;text-align:right;font-size:11px;letter-spacing:0px;color:#000">0,21</div><div class="t" style="left:1147.5px;top:493.3px;font-size:11px;letter-spacing:-0.3px;color:#000">VP-2</div><div style="left:400px;top:507px;width:770px;height:18px;background:#dfeafc"></div><div style="left:464px;top:507px;width:1px;height:18px;background:rgba(255,255,255,0.75)"></div><div style="left:584px;top:507px;width:1px;height:18px;background:rgba(255,255,255,0.75)"></div><div style="left:655px;top:507px;width:1px;height:18px;background:rgba(255,255,255,0.75)"></div><div style="left:793px;top:507px;width:1px;height:18px;background:rgba(255,255,255,0.75)"></div><div style="left:932px;top:507px;width:1px;height:18px;background:rgba(255,255,255,0.75)"></div><div style="left:1057px;top:507px;width:1px;height:18px;background:rgba(255,255,255,0.75)"></div><div style="left:1145px;top:507px;width:1px;height:18px;background:rgba(255,255,255,0.75)"></div><div class="t" style="left:402px;top:511.3px;font-size:11px;letter-spacing:0px;color:#000">30.03.2018</div><div class="t" style="left:466px;top:511.3px;font-size:11px;letter-spacing:-0.3px;color:#000">Obrábění kovů (řezání)</div><div class="t" style="left:586px;top:511.3px;font-size:11px;letter-spacing:-0.3px;color:#000">první směna</div><div class="t" style="left:657px;top:511.3px;font-size:11px;letter-spacing:-0.3px;color:#000">Řezání trubky</div><div class="t" style="left:795px;top:511.3px;font-size:11px;letter-spacing:-0.3px;color:#000">Horské kolo XC Basic 19"</div><div class="t" style="left:934px;top:511.3px;font-size:11px;letter-spacing:0px;color:#000">ML-2018-0000193</div><div class="t" style="left:1057px;top:511.3px;width:84px;text-align:right;font-size:11px;letter-spacing:0px;color:#000">0,21</div><div class="t" style="left:1147.5px;top:511.3px;font-size:11px;letter-spacing:-0.3px;color:#000">VP-2</div><div style="left:400px;top:525px;width:770px;height:18px;background:#c9dcf8"></div><div style="left:464px;top:525px;width:1px;height:18px;background:rgba(255,255,255,0.75)"></div><div style="left:584px;top:525px;width:1px;height:18px;background:rgba(255,255,255,0.75)"></div><div style="left:655px;top:525px;width:1px;height:18px;background:rgba(255,255,255,0.75)"></div><div style="left:793px;top:525px;width:1px;height:18px;background:rgba(255,255,255,0.75)"></div><div style="left:932px;top:525px;width:1px;height:18px;background:rgba(255,255,255,0.75)"></div><div style="left:1057px;top:525px;width:1px;height:18px;background:rgba(255,255,255,0.75)"></div><div style="left:1145px;top:525px;width:1px;height:18px;background:rgba(255,255,255,0.75)"></div><div class="t" style="left:402px;top:529.3px;font-size:11px;letter-spacing:0px;color:#000">30.03.2018</div><div class="t" style="left:466px;top:529.3px;font-size:11px;letter-spacing:-0.3px;color:#000">Obrábění kovů (řezání)</div><div class="t" style="left:586px;top:529.3px;font-size:11px;letter-spacing:-0.3px;color:#000">první směna</div><div class="t" style="left:657px;top:529.3px;font-size:11px;letter-spacing:-0.3px;color:#000">Řezání kulatiny</div><div class="t" style="left:795px;top:529.3px;font-size:11px;letter-spacing:-0.3px;color:#000">Horské kolo XC Basic 19"</div><div class="t" style="left:934px;top:529.3px;font-size:11px;letter-spacing:0px;color:#000">ML-2018-0000194</div><div class="t" style="left:1057px;top:529.3px;width:84px;text-align:right;font-size:11px;letter-spacing:0px;color:#000">0,21</div><div class="t" style="left:1147.5px;top:529.3px;font-size:11px;letter-spacing:-0.3px;color:#000">VP-2</div><div style="left:400px;top:218px;width:770px;height:1px;background:#e8142c"></div><div style="left:400px;top:326px;width:770px;height:1px;background:#e8142c"></div></div></div><div style="left:1170px;top:129px;width:17px;height:422px;background:#f0f5fa"></div><div style="left:1170px;top:129px;width:17px;height:17px;background:#f8fbfd"></div><div style="left:1170px;top:184px;width:17px;height:21px;background:#d9e5f0"></div><svg style="left:1170px;top:129px" width="17" height="17"><path d="M5 10 L8.5 6.5 L12 10" fill="none" stroke="#0a1a2a" stroke-width="2.1"/></svg><div style="left:400px;top:552px;width:787px;height:17px;background:#f0f5fa"></div><div style="left:400px;top:552px;width:17px;height:17px;background:#f8fbfd"></div><div style="left:417px;top:552px;width:16px;height:17px;background:#d9e5f0"></div><svg style="left:400px;top:552px" width="17" height="17"><path d="M10.5 5 L7 8.5 L10.5 12" fill="none" stroke="#0a1a2a" stroke-width="2.2"/></svg><div class="t" style="left:1201px;top:127px;width:128px;height:22px;background:#4f88b8;color:#fff;font-size:11px;text-align:center;line-height:24px">Výběr pracovníka</div><div class="t" style="left:1201px;top:155px;width:128px;height:22px;background:#4f88b8;color:#84b6e2;font-size:11px;text-align:center;line-height:24px">Směny - změna</div><div class="t" style="left:1201px;top:191px;width:128px;height:22px;background:#4f88b8;color:#84b6e2;font-size:11px;text-align:center;line-height:24px">Pracovní výkazy</div><div class="t" style="left:1201px;top:219px;width:128px;height:22px;background:#4f88b8;color:#84b6e2;font-size:11px;text-align:center;line-height:24px">Zaplánované kapacity</div><div class="t" style="left:1201px;top:247px;width:128px;height:22px;background:#4f88b8;color:#84b6e2;font-size:11px;text-align:center;line-height:24px">Zaplánování do směn</div><div class="t" style="left:397.5px;top:579.6px;font-size:11px;color:#1e1e1e;letter-spacing:-0.2px">Přiřazení pracovníci</div><div style="left:399px;top:595px;width:789px;height:126px;border:1px solid #c8daf6;background:#f7fafe"></div><div style="left:400px;top:596px;width:787px;height:36px;background:linear-gradient(#ffffff,#eef3fa)"></div><div style="left:464px;top:596px;width:1px;height:36px;background:#dde8f6"></div><div style="left:542px;top:596px;width:1px;height:36px;background:#dde8f6"></div><div style="left:608px;top:596px;width:1px;height:36px;background:#dde8f6"></div><div style="left:662px;top:596px;width:1px;height:36px;background:#dde8f6"></div><div style="left:728px;top:596px;width:1px;height:36px;background:#dde8f6"></div><div style="left:795px;top:596px;width:1px;height:36px;background:#dde8f6"></div><div style="left:873px;top:596px;width:1px;height:36px;background:#dde8f6"></div><div style="left:960px;top:596px;width:1px;height:36px;background:#dde8f6"></div><div style="left:1060px;top:596px;width:1px;height:36px;background:#dde8f6"></div><div class="t" style="left:402.5px;top:600.2px;font-size:11px;color:#1e1e1e;letter-spacing:-0.15px">Datum</div><div class="t" style="left:467px;top:600.2px;font-size:11px;color:#1e1e1e;letter-spacing:-0.15px">Název směny</div><div class="t" style="left:545px;top:600.2px;font-size:11px;color:#1e1e1e;letter-spacing:-0.15px">Příjmení</div><div class="t" style="left:611.5px;top:600.2px;font-size:11px;color:#1e1e1e;letter-spacing:-0.15px">Jméno</div><div class="t" style="left:665px;top:600.2px;font-size:11px;color:#1e1e1e;letter-spacing:-0.15px">Kapacita</div><div class="t" style="left:665px;top:613.2px;font-size:11px;color:#1e1e1e;letter-spacing:-0.15px">plánovaná</div><div class="t" style="left:731.5px;top:600.2px;font-size:11px;color:#1e1e1e;letter-spacing:-0.15px">Kapacita</div><div class="t" style="left:731.5px;top:613.2px;font-size:11px;color:#1e1e1e;letter-spacing:-0.15px">skutečná</div><div class="t" style="left:798.5px;top:600.2px;font-size:11px;color:#1e1e1e;letter-spacing:-0.15px">Začátek</div><div class="t" style="left:798.5px;top:613.2px;font-size:11px;color:#1e1e1e;letter-spacing:-0.15px">pracovní doby</div><div class="t" style="left:876px;top:600.2px;font-size:11px;color:#1e1e1e;letter-spacing:-0.15px">Konec</div><div class="t" style="left:876px;top:613.2px;font-size:11px;color:#1e1e1e;letter-spacing:-0.15px">pracovní doby</div><div style="left:400px;top:632px;width:787px;height:18px;background:#00476e"></div><div style="left:464px;top:632px;width:1px;height:18px;background:rgba(255,255,255,0.75)"></div><div style="left:542px;top:632px;width:1px;height:18px;background:rgba(255,255,255,0.75)"></div><div style="left:608px;top:632px;width:1px;height:18px;background:rgba(255,255,255,0.75)"></div><div style="left:662px;top:632px;width:1px;height:18px;background:rgba(255,255,255,0.75)"></div><div style="left:728px;top:632px;width:1px;height:18px;background:rgba(255,255,255,0.75)"></div><div style="left:795px;top:632px;width:1px;height:18px;background:rgba(255,255,255,0.75)"></div><div style="left:873px;top:632px;width:1px;height:18px;background:rgba(255,255,255,0.75)"></div><div style="left:960px;top:632px;width:1px;height:18px;background:rgba(255,255,255,0.75)"></div><div style="left:1060px;top:632px;width:1px;height:18px;background:rgba(255,255,255,0.75)"></div><div class="t" style="left:402px;top:636.3px;font-size:11px;letter-spacing:0px;color:#fff">28.03.2018</div><div class="t" style="left:466px;top:636.3px;font-size:11px;letter-spacing:-0.3px;color:#fff">první směna</div><div class="t" style="left:544.5px;top:636.3px;font-size:11px;letter-spacing:-0.3px;color:#fff">Plocek</div><div class="t" style="left:610.5px;top:636.3px;font-size:11px;letter-spacing:-0.3px;color:#fff">Rudolf</div><div class="t" style="left:662px;top:636.3px;width:63px;text-align:right;font-size:11px;letter-spacing:0px;color:#fff">8,00</div><div class="t" style="left:728px;top:636.3px;width:64px;text-align:right;font-size:11px;letter-spacing:0px;color:#fff">8,00</div><div class="t" style="left:797.5px;top:636.3px;font-size:11px;letter-spacing:0px;color:#fff">8:00:00</div><div class="t" style="left:876px;top:636.3px;font-size:11px;letter-spacing:0px;color:#fff">16:00:00</div><div style="left:400px;top:650px;width:787px;height:18px;background:#c9dcf8"></div><div style="left:464px;top:650px;width:1px;height:18px;background:rgba(255,255,255,0.75)"></div><div style="left:542px;top:650px;width:1px;height:18px;background:rgba(255,255,255,0.75)"></div><div style="left:608px;top:650px;width:1px;height:18px;background:rgba(255,255,255,0.75)"></div><div style="left:662px;top:650px;width:1px;height:18px;background:rgba(255,255,255,0.75)"></div><div style="left:728px;top:650px;width:1px;height:18px;background:rgba(255,255,255,0.75)"></div><div style="left:795px;top:650px;width:1px;height:18px;background:rgba(255,255,255,0.75)"></div><div style="left:873px;top:650px;width:1px;height:18px;background:rgba(255,255,255,0.75)"></div><div style="left:960px;top:650px;width:1px;height:18px;background:rgba(255,255,255,0.75)"></div><div style="left:1060px;top:650px;width:1px;height:18px;background:rgba(255,255,255,0.75)"></div><div class="t" style="left:402px;top:654.3px;font-size:11px;letter-spacing:0px;color:#000">28.03.2018</div><div class="t" style="left:466px;top:654.3px;font-size:11px;letter-spacing:-0.3px;color:#000">první směna</div><div class="t" style="left:544.5px;top:654.3px;font-size:11px;letter-spacing:-0.3px;color:#000">Doležal</div><div class="t" style="left:610.5px;top:654.3px;font-size:11px;letter-spacing:-0.3px;color:#000">Martin</div><div class="t" style="left:662px;top:654.3px;width:63px;text-align:right;font-size:11px;letter-spacing:0px;color:#000">8,00</div><div class="t" style="left:728px;top:654.3px;width:64px;text-align:right;font-size:11px;letter-spacing:0px;color:#000">8,00</div><div class="t" style="left:797.5px;top:654.3px;font-size:11px;letter-spacing:0px;color:#000">8:00:00</div><div class="t" style="left:876px;top:654.3px;font-size:11px;letter-spacing:0px;color:#000">16:00:00</div><div style="left:400px;top:668px;width:787px;height:18px;background:#dfeafc"></div><div style="left:464px;top:668px;width:1px;height:18px;background:rgba(255,255,255,0.75)"></div><div style="left:542px;top:668px;width:1px;height:18px;background:rgba(255,255,255,0.75)"></div><div style="left:608px;top:668px;width:1px;height:18px;background:rgba(255,255,255,0.75)"></div><div style="left:662px;top:668px;width:1px;height:18px;background:rgba(255,255,255,0.75)"></div><div style="left:728px;top:668px;width:1px;height:18px;background:rgba(255,255,255,0.75)"></div><div style="left:795px;top:668px;width:1px;height:18px;background:rgba(255,255,255,0.75)"></div><div style="left:873px;top:668px;width:1px;height:18px;background:rgba(255,255,255,0.75)"></div><div style="left:960px;top:668px;width:1px;height:18px;background:rgba(255,255,255,0.75)"></div><div style="left:1060px;top:668px;width:1px;height:18px;background:rgba(255,255,255,0.75)"></div><div class="t" style="left:402px;top:672.3px;font-size:11px;letter-spacing:0px;color:#000">28.03.2018</div><div class="t" style="left:466px;top:672.3px;font-size:11px;letter-spacing:-0.3px;color:#000">první směna</div><div class="t" style="left:544.5px;top:672.3px;font-size:11px;letter-spacing:-0.3px;color:#000">Buršík</div><div class="t" style="left:610.5px;top:672.3px;font-size:11px;letter-spacing:-0.3px;color:#000">Petr</div><div class="t" style="left:662px;top:672.3px;width:63px;text-align:right;font-size:11px;letter-spacing:0px;color:#000">8,00</div><div class="t" style="left:728px;top:672.3px;width:64px;text-align:right;font-size:11px;letter-spacing:0px;color:#000">8,00</div><div class="t" style="left:797.5px;top:672.3px;font-size:11px;letter-spacing:0px;color:#000">8:00:00</div><div class="t" style="left:876px;top:672.3px;font-size:11px;letter-spacing:0px;color:#000">16:00:00</div><div style="left:400px;top:703px;width:787px;height:17px;background:#f0f5fa"></div><div style="left:400px;top:703px;width:17px;height:17px;background:#f8fbfd"></div><div style="left:417px;top:703px;width:16px;height:17px;background:#d9e5f0"></div><svg style="left:400px;top:703px" width="17" height="17"><path d="M10.5 5 L7 8.5 L10.5 12" fill="none" stroke="#0a1a2a" stroke-width="2.2"/></svg><div style="left:925px;top:364px;width:744px;height:645px;background:#fff;border:1px solid #e4e0dc"></div><div style="left:926px;top:365px;width:742px;height:27px;background:#ebebeb;border-bottom:1px solid #d6e2f0"></div><svg style="left:929px;top:368.5px" width="18" height="19" viewBox="0 0 18 19"><path d="M2.5 2 L16 9.5 L2.5 17 Z" fill="#fefefe" stroke="#fefefe" stroke-width="1.6" stroke-linejoin="round"/><path d="M6.6 14 L13.6 10" stroke="#b4b4b4" stroke-width="1.7" stroke-linecap="round"/><path d="M3.8 5 L4.5 3" stroke="#cfcfcf" stroke-width="1"/></svg><div class="t" style="left:951px;top:372.1px;font-size:11.6px;letter-spacing:0.12px;font-weight:bold;color:#3d3d3d">Souhrnné vytížení kapacit technologií</div><div class="t" style="left:1535px;top:372.6px;width:50px;text-align:right;font-size:11.5px;font-weight:bold;color:#3d3d3d">14</div><svg style="left:1595px;top:373px" width="70" height="14" viewBox="0 0 70 14"><path d="M1 5.5 H11.5" stroke="#000" stroke-width="1.6"/><rect x="26.5" y="1.5" width="9.5" height="9.5" fill="none" stroke="#000" stroke-width="1.4"/><path d="M51.5 1.5 L60.5 10.5 M60.5 1.5 L51.5 10.5" stroke="#000" stroke-width="2"/></svg><div style="left:1167px;top:400px;width:411px;height:29px;background:#c9dff0;border:1px solid #8db2d6"></div><div style="left:1578px;top:400px;width:62px;height:29px;background:#c9dff0;border-top:1px solid #8db2d6;border-bottom:1px solid #8db2d6"></div><div class="t" style="left:1229.2px;top:404.7px;font-size:16px;color:#000">Březen 2018</div><div style="left:1578px;top:401px;width:62px;height:27px;overflow:hidden"><div class="t" style="left:5px;top:2.7px;font-size:16px;color:#000">Duben 2018</div></div><div style="left:926px;top:429px;width:714px;height:50px;overflow:hidden"><div style="left:-926px;top:-429px;width:1700px;height:600px"><div class="t" style="left:1231.3px;top:432.5px;font-size:16px;color:#000">26 po</div><div style="left:1231px;top:451px;width:1px;height:22px;background:#8fb0d0"></div><div class="t" style="left:1289.2px;top:432.5px;font-size:16px;color:#000">27 út</div><div style="left:1289px;top:451px;width:1px;height:22px;background:#8fb0d0"></div><div class="t" style="left:1347.1px;top:432.5px;font-size:16px;color:#000">28 st</div><div style="left:1347px;top:451px;width:1px;height:22px;background:#8fb0d0"></div><div class="t" style="left:1404.2px;top:432.5px;font-size:16px;color:#000">29 čt</div><div style="left:1404px;top:451px;width:1px;height:22px;background:#8fb0d0"></div><div class="t" style="left:1462px;top:432.5px;font-size:16px;color:#000">30 pá</div><div style="left:1462px;top:451px;width:1px;height:22px;background:#8fb0d0"></div><div class="t" style="left:1519.5px;top:432.5px;font-size:16px;color:#000">31 so</div><div style="left:1520px;top:451px;width:1px;height:22px;background:#8fb0d0"></div><div class="t" style="left:1577.5px;top:432.5px;font-size:16px;color:#000">1 ne</div><div style="left:1578px;top:451px;width:1px;height:22px;background:#8fb0d0"></div><div class="t" style="left:1635.8px;top:432.5px;font-size:16px;color:#000">2 po</div><div style="left:1636px;top:451px;width:1px;height:22px;background:#8fb0d0"></div><div style="left:1167px;top:459px;width:1px;height:14px;background:#8fb0d0"></div><div style="left:1174px;top:459px;width:1px;height:14px;background:#8fb0d0"></div></div></div><div class="t" style="left:941px;top:517.8px;font-size:16px;color:#000;letter-spacing:0.25px">Lakovna</div><div class="t" style="left:941px;top:553.8px;font-size:16px;color:#000;letter-spacing:0.25px">Místnosti</div><div class="t" style="left:941px;top:589.8px;font-size:16px;color:#000;letter-spacing:0.25px">Montáž</div><div class="t" style="left:941px;top:625.8px;font-size:16px;color:#000;letter-spacing:0.25px">Nákladní vozidlo</div><div class="t" style="left:941px;top:661.8px;font-size:16px;color:#000;letter-spacing:0.25px">Návěs silničního vozidla</div><div class="t" style="left:941px;top:697.8px;font-size:16px;color:#000;letter-spacing:0.25px">Obrábění kovů (řezání)</div><div class="t" style="left:941px;top:733.8px;font-size:16px;color:#000;letter-spacing:0.25px">Obrábění kovů (soustružení)</div><div class="t" style="left:941px;top:769.8px;font-size:16px;color:#000;letter-spacing:0.25px">Osobní vozidlo</div><div class="t" style="left:941px;top:805.8px;font-size:16px;color:#000;letter-spacing:0.25px">Projektory</div><div class="t" style="left:941px;top:841.8px;font-size:16px;color:#000;letter-spacing:0.25px">Svařovna a brusírna</div><div class="t" style="left:941px;top:877.8px;font-size:16px;color:#000;letter-spacing:0.25px">Vrtání</div><div class="t" style="left:941px;top:913.8px;font-size:16px;color:#000;letter-spacing:0.25px">Vypalování laserem</div><div style="left:1225px;top:501px;width:1px;height:442px;background:#90b4dc"></div><div style="left:1226px;top:501px;width:414px;height:479px;overflow:hidden"><div style="left:-1226px;top:-501px;width:1700px;height:1100px"><div style="left:1226px;top:476px;width:5px;height:35px;background:#ff8000"></div><div style="left:1232px;top:476px;width:57px;height:35px;background:#d9f2e5;border:1px solid #ff8000"></div><div style="left:1290px;top:476px;width:57px;height:35px;background:#d9f2e5;border:1px solid #ff8000"></div><div style="left:1291px;top:477px;width:5px;height:33px;background:#007a00"></div><div style="left:1348px;top:476px;width:56px;height:35px;background:#d9f2e5;border:1px solid #ff8000"></div><div style="left:1405px;top:476px;width:57px;height:35px;background:#d9f2e5;border:1px solid #ff8000"></div><div style="left:1463px;top:476px;width:56px;height:35px;background:#d9f2e5;border:1px solid #ff8000"></div><div style="left:1464px;top:477px;width:3px;height:33px;background:#007a00"></div><div style="left:1520px;top:476px;width:57px;height:35px;background:#ff8000"></div><div style="left:1578px;top:476px;width:57px;height:35px;background:#ff8000"></div><div style="left:1636px;top:476px;width:57px;height:35px;background:#d9f2e5;border:1px solid #ff8000"></div><div style="left:1226px;top:512px;width:5px;height:35px;background:#ff8000"></div><div style="left:1232px;top:512px;width:57px;height:35px;background:#d9f2e5;border:1px solid #ff8000"></div><div class="t" style="left:1235.3px;top:517.7px;font-size:16px;color:#000;letter-spacing:0.2px">0<span class="sl">/</span>8</div><div style="left:1290px;top:512px;width:57px;height:35px;background:#d9f2e5;border:1px solid #ff8000"></div><div class="t" style="left:1293.3px;top:517.7px;font-size:16px;color:#000;letter-spacing:0.2px">0<span class="sl">/</span>8</div><div style="left:1348px;top:512px;width:56px;height:35px;background:#d9f2e5;border:1px solid #ff8000"></div><div style="left:1349px;top:513px;width:3px;height:33px;background:#007a00"></div><div class="t" style="left:1351.3px;top:517.7px;font-size:16px;color:#000;letter-spacing:0.2px">0<span class="sl">/</span>8</div><div style="left:1405px;top:512px;width:57px;height:35px;background:#d9f2e5;border:1px solid #ff8000"></div><div style="left:1406px;top:513px;width:8px;height:33px;background:#007a00"></div><div class="t" style="left:1408.3px;top:517.7px;font-size:16px;color:#000;letter-spacing:0.2px">1<span class="sl">/</span>8</div><div style="left:1463px;top:512px;width:56px;height:35px;background:#d9f2e5;border:1px solid #ff8000"></div><div class="t" style="left:1466.3px;top:517.7px;font-size:16px;color:#000;letter-spacing:0.2px">0<span class="sl">/</span>8</div><div style="left:1520px;top:512px;width:57px;height:35px;background:#ff8000"></div><div class="t" style="left:1523.3px;top:517.7px;font-size:16px;color:#000;letter-spacing:0.2px">0<span class="sl">/</span>0</div><div style="left:1578px;top:512px;width:57px;height:35px;background:#ff8000"></div><div class="t" style="left:1581.3px;top:517.7px;font-size:16px;color:#000;letter-spacing:0.2px">0<span class="sl">/</span>0</div><div style="left:1636px;top:512px;width:57px;height:35px;background:#d9f2e5;border:1px solid #ff8000"></div><div class="t" style="left:1639.3px;top:517.7px;font-size:16px;color:#000;letter-spacing:0.2px">0<span class="sl">/</span>8</div><div style="left:1226px;top:584px;width:5px;height:35px;background:#ff8000"></div><div style="left:1232px;top:584px;width:57px;height:35px;background:#fff0e6;border:1px solid #ff8000"></div><div style="left:1234px;top:585px;width:2px;height:33px;background:#ffd0b0"></div><div class="t" style="left:1235.3px;top:589.7px;font-size:16px;color:#000;letter-spacing:0.2px">17<span class="sl">/</span>16</div><div style="left:1290px;top:584px;width:57px;height:35px;background:#fff0e6;border:1px solid #ff8000"></div><div style="left:1292px;top:585px;width:2px;height:33px;background:#ffd0b0"></div><div class="t" style="left:1293.3px;top:589.7px;font-size:16px;color:#000;letter-spacing:0.2px">17<span class="sl">/</span>16</div><div style="left:1348px;top:584px;width:56px;height:35px;background:#d9f2e5;border:1px solid #ff8000"></div><div style="left:1349px;top:585px;width:39px;height:33px;background:#007a00"></div><div class="t" style="left:1351.3px;top:589.7px;font-size:16px;color:#000;letter-spacing:0.2px">11<span class="sl">/</span>16</div><div style="left:1405px;top:584px;width:57px;height:35px;background:#fff0e6;border:1px solid #ff8000"></div><div style="left:1407px;top:585px;width:2px;height:33px;background:#ffd0b0"></div><div class="t" style="left:1408.3px;top:589.7px;font-size:16px;color:#000;letter-spacing:0.2px">17<span class="sl">/</span>16</div><div style="left:1463px;top:584px;width:56px;height:35px;background:#fff0e6;border:1px solid #ff8000"></div><div style="left:1465px;top:585px;width:2px;height:33px;background:#ffd0b0"></div><div class="t" style="left:1466.3px;top:589.7px;font-size:16px;color:#000;letter-spacing:0.2px">17<span class="sl">/</span>16</div><div style="left:1520px;top:584px;width:57px;height:35px;background:#ff8000"></div><div class="t" style="left:1523.3px;top:589.7px;font-size:16px;color:#000;letter-spacing:0.2px">0<span class="sl">/</span>0</div><div style="left:1578px;top:584px;width:57px;height:35px;background:#ff8000"></div><div class="t" style="left:1581.3px;top:589.7px;font-size:16px;color:#000;letter-spacing:0.2px">0<span class="sl">/</span>0</div><div style="left:1636px;top:584px;width:57px;height:35px;background:#fff0e6;border:1px solid #ff8000"></div><div style="left:1638px;top:585px;width:2px;height:33px;background:#ffd0b0"></div><div class="t" style="left:1639.3px;top:589.7px;font-size:16px;color:#000;letter-spacing:0.2px">17<span class="sl">/</span>16</div><div style="left:1226px;top:692px;width:5px;height:35px;background:#ff8000"></div><div style="left:1232px;top:692px;width:57px;height:35px;background:#d9f2e5;border:1px solid #ff8000"></div><div class="t" style="left:1235.3px;top:697.7px;font-size:16px;color:#000;letter-spacing:0.2px">0<span class="sl">/</span>8</div><div style="left:1290px;top:692px;width:57px;height:35px;background:#d9f2e5;border:1px solid #ff8000"></div><div style="left:1291px;top:693px;width:31px;height:33px;background:#007a00"></div><div class="t" style="left:1293.3px;top:697.7px;font-size:16px;color:#000;letter-spacing:0.2px">4<span class="sl">/</span>8</div><div style="left:1348px;top:692px;width:56px;height:35px;background:#d9f2e5;border:1px solid #ff8000"></div><div class="t" style="left:1351.3px;top:697.7px;font-size:16px;color:#000;letter-spacing:0.2px">0<span class="sl">/</span>8</div><div style="left:1405px;top:692px;width:57px;height:35px;background:#d9f2e5;border:1px solid #ff8000"></div><div class="t" style="left:1408.3px;top:697.7px;font-size:16px;color:#000;letter-spacing:0.2px">0<span class="sl">/</span>8</div><div style="left:1463px;top:692px;width:56px;height:35px;background:#d9f2e5;border:1px solid #ff8000"></div><div style="left:1464px;top:693px;width:14px;height:33px;background:#007a00"></div><div class="t" style="left:1466.3px;top:697.7px;font-size:16px;color:#000;letter-spacing:0.2px">2<span class="sl">/</span>8</div><div style="left:1520px;top:692px;width:57px;height:35px;background:#ff8000"></div><div class="t" style="left:1523.3px;top:697.7px;font-size:16px;color:#000;letter-spacing:0.2px">0<span class="sl">/</span>0</div><div style="left:1578px;top:692px;width:57px;height:35px;background:#ff8000"></div><div class="t" style="left:1581.3px;top:697.7px;font-size:16px;color:#000;letter-spacing:0.2px">0<span class="sl">/</span>0</div><div style="left:1636px;top:692px;width:57px;height:35px;background:#d9f2e5;border:1px solid #ff8000"></div><div class="t" style="left:1639.3px;top:697.7px;font-size:16px;color:#000;letter-spacing:0.2px">0<span class="sl">/</span>8</div><div style="left:1226px;top:728px;width:5px;height:35px;background:#ff8000"></div><div style="left:1232px;top:728px;width:57px;height:35px;background:#d9f2e5;border:1px solid #ff8000"></div><div class="t" style="left:1235.3px;top:733.7px;font-size:16px;color:#000;letter-spacing:0.2px">0<span class="sl">/</span>8</div><div style="left:1290px;top:728px;width:57px;height:35px;background:#d9f2e5;border:1px solid #ff8000"></div><div style="left:1291px;top:729px;width:34px;height:33px;background:#007a00"></div><div class="t" style="left:1293.3px;top:733.7px;font-size:16px;color:#000;letter-spacing:0.2px">5<span class="sl">/</span>8</div><div style="left:1348px;top:728px;width:56px;height:35px;background:#d9f2e5;border:1px solid #ff8000"></div><div class="t" style="left:1351.3px;top:733.7px;font-size:16px;color:#000;letter-spacing:0.2px">0<span class="sl">/</span>8</div><div style="left:1405px;top:728px;width:57px;height:35px;background:#d9f2e5;border:1px solid #ff8000"></div><div class="t" style="left:1408.3px;top:733.7px;font-size:16px;color:#000;letter-spacing:0.2px">0<span class="sl">/</span>8</div><div style="left:1463px;top:728px;width:56px;height:35px;background:#d9f2e5;border:1px solid #ff8000"></div><div style="left:1464px;top:729px;width:10px;height:33px;background:#007a00"></div><div class="t" style="left:1466.3px;top:733.7px;font-size:16px;color:#000;letter-spacing:0.2px">2<span class="sl">/</span>8</div><div style="left:1520px;top:728px;width:57px;height:35px;background:#ff8000"></div><div class="t" style="left:1523.3px;top:733.7px;font-size:16px;color:#000;letter-spacing:0.2px">0<span class="sl">/</span>0</div><div style="left:1578px;top:728px;width:57px;height:35px;background:#ff8000"></div><div class="t" style="left:1581.3px;top:733.7px;font-size:16px;color:#000;letter-spacing:0.2px">0<span class="sl">/</span>0</div><div style="left:1636px;top:728px;width:57px;height:35px;background:#d9f2e5;border:1px solid #ff8000"></div><div class="t" style="left:1639.3px;top:733.7px;font-size:16px;color:#000;letter-spacing:0.2px">0<span class="sl">/</span>8</div><div style="left:1226px;top:836px;width:5px;height:35px;background:#ff8000"></div><div style="left:1232px;top:836px;width:57px;height:35px;background:#fff0e6;border:1px solid #ff8000"></div><div style="left:1234px;top:837px;width:2px;height:33px;background:#ffd0b0"></div><div class="t" style="left:1235.3px;top:841.7px;font-size:16px;color:#000;letter-spacing:0.2px">26<span class="sl">/</span>24</div><div style="left:1290px;top:836px;width:57px;height:35px;background:#d9f2e5;border:1px solid #ff8000"></div><div style="left:1291px;top:837px;width:14px;height:33px;background:#007a00"></div><div class="t" style="left:1293.3px;top:841.7px;font-size:16px;color:#000;letter-spacing:0.2px">6<span class="sl">/</span>24</div><div style="left:1348px;top:836px;width:56px;height:35px;background:#d9f2e5;border:1px solid #ff8000"></div><div style="left:1349px;top:837px;width:2px;height:33px;background:#007a00"></div><div class="t" style="left:1351.3px;top:841.7px;font-size:16px;color:#000;letter-spacing:0.2px">1<span class="sl">/</span>24</div><div style="left:1405px;top:836px;width:57px;height:35px;background:#d9f2e5;border:1px solid #ff8000"></div><div style="left:1406px;top:837px;width:38px;height:33px;background:#007a00"></div><div class="t" style="left:1408.3px;top:841.7px;font-size:16px;color:#000;letter-spacing:0.2px">17<span class="sl">/</span>24</div><div style="left:1463px;top:836px;width:56px;height:35px;background:#d9f2e5;border:1px solid #ff8000"></div><div style="left:1464px;top:837px;width:26px;height:33px;background:#007a00"></div><div class="t" style="left:1466.3px;top:841.7px;font-size:16px;color:#000;letter-spacing:0.2px">11<span class="sl">/</span>24</div><div style="left:1520px;top:836px;width:57px;height:35px;background:#ff8000"></div><div class="t" style="left:1523.3px;top:841.7px;font-size:16px;color:#000;letter-spacing:0.2px">0<span class="sl">/</span>0</div><div style="left:1578px;top:836px;width:57px;height:35px;background:#ff8000"></div><div class="t" style="left:1581.3px;top:841.7px;font-size:16px;color:#000;letter-spacing:0.2px">0<span class="sl">/</span>0</div><div style="left:1636px;top:836px;width:57px;height:35px;background:#fff0e6;border:1px solid #ff8000"></div><div style="left:1638px;top:837px;width:2px;height:33px;background:#ffd0b0"></div><div class="t" style="left:1639.3px;top:841.7px;font-size:16px;color:#000;letter-spacing:0.2px">26<span class="sl">/</span>24</div><div style="left:1226px;top:872px;width:5px;height:35px;background:#ff8000"></div><div style="left:1232px;top:872px;width:57px;height:35px;background:#d9f2e5;border:1px solid #ff8000"></div><div class="t" style="left:1235.3px;top:877.7px;font-size:16px;color:#000;letter-spacing:0.2px">0<span class="sl">/</span>8</div><div style="left:1290px;top:872px;width:57px;height:35px;background:#d9f2e5;border:1px solid #ff8000"></div><div style="left:1291px;top:873px;width:4px;height:33px;background:#007a00"></div><div class="t" style="left:1293.3px;top:877.7px;font-size:16px;color:#000;letter-spacing:0.2px">1<span class="sl">/</span>8</div><div style="left:1348px;top:872px;width:56px;height:35px;background:#d9f2e5;border:1px solid #ff8000"></div><div class="t" style="left:1351.3px;top:877.7px;font-size:16px;color:#000;letter-spacing:0.2px">0<span class="sl">/</span>8</div><div style="left:1405px;top:872px;width:57px;height:35px;background:#d9f2e5;border:1px solid #ff8000"></div><div class="t" style="left:1408.3px;top:877.7px;font-size:16px;color:#000;letter-spacing:0.2px">0<span class="sl">/</span>8</div><div style="left:1463px;top:872px;width:56px;height:35px;background:#d9f2e5;border:1px solid #ff8000"></div><div style="left:1464px;top:873px;width:3px;height:33px;background:#007a00"></div><div class="t" style="left:1466.3px;top:877.7px;font-size:16px;color:#000;letter-spacing:0.2px">0<span class="sl">/</span>8</div><div style="left:1520px;top:872px;width:57px;height:35px;background:#ff8000"></div><div class="t" style="left:1523.3px;top:877.7px;font-size:16px;color:#000;letter-spacing:0.2px">0<span class="sl">/</span>0</div><div style="left:1578px;top:872px;width:57px;height:35px;background:#ff8000"></div><div class="t" style="left:1581.3px;top:877.7px;font-size:16px;color:#000;letter-spacing:0.2px">0<span class="sl">/</span>0</div><div style="left:1636px;top:872px;width:57px;height:35px;background:#d9f2e5;border:1px solid #ff8000"></div><div class="t" style="left:1639.3px;top:877.7px;font-size:16px;color:#000;letter-spacing:0.2px">0<span class="sl">/</span>8</div><div style="left:1226px;top:908px;width:5px;height:35px;background:#ff8000"></div><div style="left:1232px;top:908px;width:57px;height:35px;background:#d9f2e5;border:1px solid #ff8000"></div><div class="t" style="left:1235.3px;top:913.7px;font-size:16px;color:#000;letter-spacing:0.2px">0<span class="sl">/</span>8</div><div style="left:1290px;top:908px;width:57px;height:35px;background:#d9f2e5;border:1px solid #ff8000"></div><div style="left:1291px;top:909px;width:1.5px;height:33px;background:#007a00"></div><div class="t" style="left:1293.3px;top:913.7px;font-size:16px;color:#000;letter-spacing:0.2px">0<span class="sl">/</span>8</div><div style="left:1348px;top:908px;width:56px;height:35px;background:#d9f2e5;border:1px solid #ff8000"></div><div class="t" style="left:1351.3px;top:913.7px;font-size:16px;color:#000;letter-spacing:0.2px">0<span class="sl">/</span>8</div><div style="left:1405px;top:908px;width:57px;height:35px;background:#d9f2e5;border:1px solid #ff8000"></div><div class="t" style="left:1408.3px;top:913.7px;font-size:16px;color:#000;letter-spacing:0.2px">0<span class="sl">/</span>8</div><div style="left:1463px;top:908px;width:56px;height:35px;background:#d9f2e5;border:1px solid #ff8000"></div><div style="left:1464px;top:909px;width:1px;height:33px;background:#007a00"></div><div class="t" style="left:1466.3px;top:913.7px;font-size:16px;color:#000;letter-spacing:0.2px">0<span class="sl">/</span>8</div><div style="left:1520px;top:908px;width:57px;height:35px;background:#ff8000"></div><div class="t" style="left:1523.3px;top:913.7px;font-size:16px;color:#000;letter-spacing:0.2px">0<span class="sl">/</span>0</div><div style="left:1578px;top:908px;width:57px;height:35px;background:#ff8000"></div><div class="t" style="left:1581.3px;top:913.7px;font-size:16px;color:#000;letter-spacing:0.2px">0<span class="sl">/</span>0</div><div style="left:1636px;top:908px;width:57px;height:35px;background:#d9f2e5;border:1px solid #ff8000"></div><div class="t" style="left:1639.3px;top:913.7px;font-size:16px;color:#000;letter-spacing:0.2px">0<span class="sl">/</span>8</div></div></div><div style="left:1640px;top:400px;width:17px;height:580px;background:#f0f5fa"></div><div style="left:1640px;top:400px;width:17px;height:17px;background:#f8fbfd"></div><div style="left:1640px;top:462px;width:17px;height:435px;background:#d4e4f2"></div><div style="left:1640px;top:963px;width:17px;height:17px;background:#f8fbfd"></div><svg style="left:1640px;top:400px" width="17" height="17"><path d="M5 10.5 L8.5 7 L12 10.5" fill="none" stroke="#0a1a2a" stroke-width="2.1"/></svg><svg style="left:1640px;top:963px" width="17" height="17"><path d="M5 7 L8.5 10.5 L12 7" fill="none" stroke="#0a1a2a" stroke-width="2.1"/></svg><div style="left:937px;top:980px;width:720px;height:17px;background:#f0f5fa"></div><div style="left:1623px;top:980px;width:34px;height:17px;background:#f8fbfd"></div><div style="left:966px;top:980px;width:43px;height:17px;background:#d4e4f2"></div><svg style="left:937px;top:980px" width="17" height="17"><path d="M10.5 5 L7 8.5 L10.5 12" fill="none" stroke="#0a1a2a" stroke-width="2.1"/></svg><svg style="left:1623px;top:980px" width="17" height="17"><path d="M7 5 L10.5 8.5 L7 12" fill="none" stroke="#0a1a2a" stroke-width="2.1"/></svg></body></html>
